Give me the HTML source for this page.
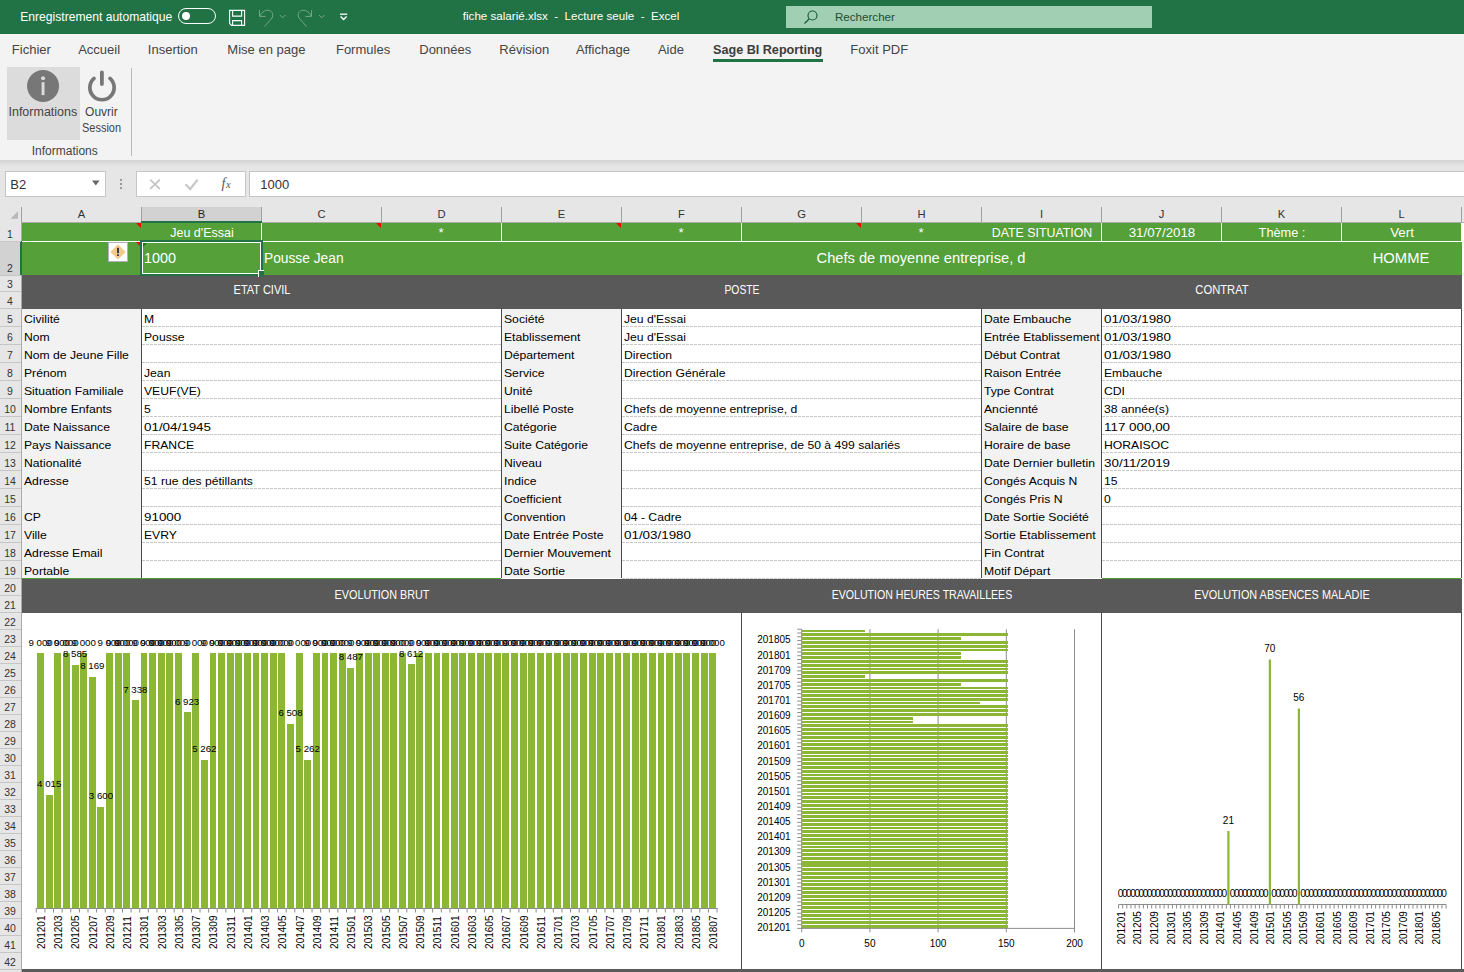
<!DOCTYPE html><html><head><meta charset="utf-8"><style>
html,body{margin:0;padding:0;width:1464px;height:972px;overflow:hidden;background:#fff}
body{position:relative;font-family:"Liberation Sans",sans-serif}
.r{position:absolute;box-sizing:content-box}
.t{position:absolute;white-space:pre}
svg.r{overflow:visible}
</style></head><body>
<div class="r" style="left:0px;top:0px;width:1464px;height:34px;background:#217346;"></div>
<div class="t" style="top:10.71px;font-size:12.1px;line-height:12.1px;color:#fff;left:20.30px;">Enregistrement automatique</div>
<div class="r" style="left:178px;top:8px;width:36px;height:14px;border:1px solid #fff;border-radius:9px;"></div>
<div class="r" style="left:182px;top:12px;width:8px;height:8px;border-radius:50%;background:#fff;"></div>
<svg class="r" style="left:0;top:0" width="360" height="34" viewBox="0 0 360 34">
<path d="M229.6 10.4 H244.6 V25.4 H231.6 L229.6 23.4 Z" fill="none" stroke="#fff" stroke-width="1.1"/>
<path d="M232.6 10.4 V16.1 H241.6 V10.4" fill="none" stroke="#fff" stroke-width="1.1"/>
<path d="M232.6 25.4 V20.6 H241.6 V25.4" fill="none" stroke="#fff" stroke-width="1.1"/>
<g fill="none" stroke="#74a887" stroke-width="1">
<path d="M259.5 10.2 V16.4 H265.6"/>
<path d="M260 16 C262 11.5 266 9.5 269.5 10.5 C273 11.7 273.5 15.5 272 18 L264.5 26.5"/>
<path d="M279.8 15 L282.6 17.8 L285.4 15"/>
<path d="M311.5 10.2 V16.4 H305.4"/>
<path d="M311 16 C309 11.5 305 9.5 301.5 10.5 C298 11.7 297.5 15.5 299 18 L306.5 26.5"/>
<path d="M319 15 L321.8 17.8 L324.6 15"/>
</g>
<path d="M340 14.2 H347.2" stroke="#fff" stroke-width="1.3"/>
<path d="M340.6 16.6 L343.6 19.6 L346.6 16.6" fill="none" stroke="#fff" stroke-width="1.4"/>
</svg>
<div class="t" style="top:10.34px;font-size:11.6px;line-height:11.6px;color:#fff;left:462.80px;">fiche salarié.xlsx  -  Lecture seule  -  Excel</div>
<div class="r" style="left:786px;top:6px;width:366px;height:22px;background:#a0cfb3;"></div>
<svg class="r" style="left:803px;top:9px" width="16" height="16" viewBox="0 0 16 16">
<circle cx="9.5" cy="6.5" r="4.5" fill="none" stroke="#1f5f3a" stroke-width="1.2"/>
<path d="M6.3 9.7 L1.5 14.5" stroke="#1f5f3a" stroke-width="1.3"/>
</svg>
<div class="t" style="top:11.44px;font-size:11.6px;line-height:11.6px;color:#1a5030;left:835.00px;">Rechercher</div>
<div class="r" style="left:0px;top:34px;width:1464px;height:126px;background:#f3f3f3;"></div>
<div class="t" style="top:42.85px;font-size:13px;line-height:13px;color:#444;left:11.86px;">Fichier</div>
<div class="t" style="top:42.85px;font-size:13px;line-height:13px;color:#444;left:78.16px;">Accueil</div>
<div class="t" style="top:42.85px;font-size:13px;line-height:13px;color:#444;left:147.86px;">Insertion</div>
<div class="t" style="top:42.85px;font-size:13px;line-height:13px;color:#444;left:227.36px;">Mise en page</div>
<div class="t" style="top:42.85px;font-size:13px;line-height:13px;color:#444;left:335.96px;">Formules</div>
<div class="t" style="top:42.85px;font-size:13px;line-height:13px;color:#444;left:419.26px;">Données</div>
<div class="t" style="top:42.85px;font-size:13px;line-height:13px;color:#444;left:499.36px;">Révision</div>
<div class="t" style="top:42.85px;font-size:13px;line-height:13px;color:#444;left:575.96px;">Affichage</div>
<div class="t" style="top:42.85px;font-size:13px;line-height:13px;color:#444;left:657.96px;">Aide</div>
<div class="t" style="top:42.85px;font-size:13px;line-height:13px;color:#444;left:850.36px;">Foxit PDF</div>
<div class="t" style="top:42.85px;font-size:13px;line-height:13px;color:#3c3c3c;font-weight:bold;left:713.20px;transform:scaleX(0.97);transform-origin:0 0;">Sage BI Reporting</div>
<div class="r" style="left:713px;top:59px;width:110px;height:3px;background:#217346;"></div>
<div class="r" style="left:7px;top:67px;width:73px;height:73px;background:#dcdcdc;"></div>
<svg class="r" style="left:0;top:0" width="130" height="110" viewBox="0 0 130 110">
<circle cx="43.05" cy="86" r="16" fill="#777"/>
<circle cx="43.05" cy="78.3" r="2" fill="#dcdcdc"/>
<rect x="41.6" y="82.2" width="2.9" height="12.9" fill="#dcdcdc"/>
<path d="M94.03 78.43 A12.15 12.15 0 1 0 109.97 78.43" fill="none" stroke="#777" stroke-width="3.7" stroke-linecap="round"/>
<path d="M101.9 72.3 V84" stroke="#777" stroke-width="3.8" stroke-linecap="round"/>
</svg>
<div class="t" style="top:105.97px;font-size:12.5px;line-height:12.5px;color:#444;left:8.47px;">Informations</div>
<div class="t" style="top:106.40px;font-size:12px;line-height:12px;color:#444;left:85.10px;">Ouvrir</div>
<div class="t" style="top:122.03px;font-size:12.2px;line-height:12.2px;color:#444;left:81.75px;transform:scaleX(0.9);transform-origin:0 0;">Session</div>
<div class="t" style="top:145.40px;font-size:12px;line-height:12px;color:#444;left:31.72px;">Informations</div>
<div class="r" style="left:131px;top:68px;width:1px;height:88px;background:#b8b8b8;"></div>
<div class="r" style="left:0;top:160px;width:1464px;height:47px;background:#e6e6e6"></div>
<div class="r" style="left:0;top:160px;width:1464px;height:6px;background:linear-gradient(#d2d2d2,#e6e6e6)"></div>
<div class="r" style="left:5px;top:171px;width:99px;height:24px;background:#fff;border:1px solid #c6c6c6"></div>
<div class="t" style="top:177.75px;font-size:13px;line-height:13px;color:#333;left:10.26px;">B2</div>
<svg class="r" style="left:91px;top:180px" width="10" height="7" viewBox="0 0 10 7"><path d="M1 0.5 H8.6 L4.8 5.5 Z" fill="#666"/></svg>
<div class="r" style="left:120px;top:179px;width:2px;height:2px;background:#9a9a9a;"></div>
<div class="r" style="left:120px;top:183px;width:2px;height:2px;background:#9a9a9a;"></div>
<div class="r" style="left:120px;top:187px;width:2px;height:2px;background:#9a9a9a;"></div>
<div class="r" style="left:136px;top:171px;width:108px;height:24px;background:#fff;border:1px solid #c6c6c6"></div>
<svg class="r" style="left:145px;top:174px" width="100" height="20" viewBox="0 0 100 20">
<path d="M5.2 5.7 L14.8 14.9 M14.8 5.7 L5.2 14.9" stroke="#c2c2c2" stroke-width="1.6"/>
<path d="M40.5 10.2 L45.2 15 L52.6 5.8" fill="none" stroke="#c8c8c8" stroke-width="2.2"/>
</svg>
<div class="t" style="left:221.5px;top:177px;font-family:'Liberation Serif';font-style:italic;font-size:14px;line-height:14px;color:#555">f<span style="font-size:10.5px;margin-left:0.5px">x</span></div>
<div class="r" style="left:249px;top:171px;width:1220px;height:24px;background:#fff;border:1px solid #c6c6c6"></div>
<div class="t" style="top:177.75px;font-size:13px;line-height:13px;color:#333;left:260.26px;">1000</div>
<div class="r" style="left:0px;top:207px;width:1464px;height:15px;background:#e6e6e6;"></div>
<div class="r" style="left:141px;top:207px;width:120px;height:15px;background:#d2d2d2;"></div>
<div class="r" style="left:21px;top:207px;width:1px;height:15px;background:#a0a0a0;"></div>
<div class="r" style="left:141px;top:207px;width:1px;height:15px;background:#a0a0a0;"></div>
<div class="r" style="left:261px;top:207px;width:1px;height:15px;background:#a0a0a0;"></div>
<div class="r" style="left:381px;top:207px;width:1px;height:15px;background:#a0a0a0;"></div>
<div class="r" style="left:501px;top:207px;width:1px;height:15px;background:#a0a0a0;"></div>
<div class="r" style="left:621px;top:207px;width:1px;height:15px;background:#a0a0a0;"></div>
<div class="r" style="left:741px;top:207px;width:1px;height:15px;background:#a0a0a0;"></div>
<div class="r" style="left:861px;top:207px;width:1px;height:15px;background:#a0a0a0;"></div>
<div class="r" style="left:981px;top:207px;width:1px;height:15px;background:#a0a0a0;"></div>
<div class="r" style="left:1101px;top:207px;width:1px;height:15px;background:#a0a0a0;"></div>
<div class="r" style="left:1221px;top:207px;width:1px;height:15px;background:#a0a0a0;"></div>
<div class="r" style="left:1341px;top:207px;width:1px;height:15px;background:#a0a0a0;"></div>
<div class="r" style="left:1461px;top:207px;width:1px;height:15px;background:#a0a0a0;"></div>
<div class="r" style="left:0px;top:222px;width:1464px;height:1px;background:#ababab;"></div>
<div class="r" style="left:141px;top:221px;width:121px;height:2px;background:#217346;"></div>
<svg class="r" style="left:0;top:207px" width="21" height="15"><path d="M10.5 11.8 H18 V4.2 Z" fill="#b8b8b8"/></svg>
<div class="t" style="top:208.78px;font-size:11.2px;line-height:11.2px;color:#333;left:-518.50px;width:1200px;text-align:center;">A</div>
<div class="t" style="top:208.78px;font-size:11.2px;line-height:11.2px;color:#222;left:-398.50px;width:1200px;text-align:center;">B</div>
<div class="t" style="top:208.78px;font-size:11.2px;line-height:11.2px;color:#333;left:-278.50px;width:1200px;text-align:center;">C</div>
<div class="t" style="top:208.78px;font-size:11.2px;line-height:11.2px;color:#333;left:-158.50px;width:1200px;text-align:center;">D</div>
<div class="t" style="top:208.78px;font-size:11.2px;line-height:11.2px;color:#333;left:-38.50px;width:1200px;text-align:center;">E</div>
<div class="t" style="top:208.78px;font-size:11.2px;line-height:11.2px;color:#333;left:81.50px;width:1200px;text-align:center;">F</div>
<div class="t" style="top:208.78px;font-size:11.2px;line-height:11.2px;color:#333;left:201.50px;width:1200px;text-align:center;">G</div>
<div class="t" style="top:208.78px;font-size:11.2px;line-height:11.2px;color:#333;left:321.50px;width:1200px;text-align:center;">H</div>
<div class="t" style="top:208.78px;font-size:11.2px;line-height:11.2px;color:#333;left:441.50px;width:1200px;text-align:center;">I</div>
<div class="t" style="top:208.78px;font-size:11.2px;line-height:11.2px;color:#333;left:561.50px;width:1200px;text-align:center;">J</div>
<div class="t" style="top:208.78px;font-size:11.2px;line-height:11.2px;color:#333;left:681.50px;width:1200px;text-align:center;">K</div>
<div class="t" style="top:208.78px;font-size:11.2px;line-height:11.2px;color:#333;left:801.50px;width:1200px;text-align:center;">L</div>
<div class="r" style="left:0px;top:222px;width:21px;height:750px;background:#e6e6e6;"></div>
<div class="r" style="left:0px;top:242px;width:21px;height:33px;background:#d2d2d2;"></div>
<div class="r" style="left:21px;top:222px;width:1px;height:750px;background:#ababab;"></div>
<div class="r" style="left:20px;top:241px;width:2px;height:34px;background:#217346;"></div>
<div class="r" style="left:0px;top:241px;width:21px;height:1px;background:#c6c6c6;"></div>
<div class="t" style="top:227.74px;font-size:11.6px;line-height:11.6px;color:#333;left:-590.20px;width:1200px;text-align:center;transform:scaleX(0.9);transform-origin:600px 0;">1</div>
<div class="r" style="left:0px;top:275px;width:21px;height:1px;background:#c6c6c6;"></div>
<div class="t" style="top:261.74px;font-size:11.6px;line-height:11.6px;color:#333;left:-590.20px;width:1200px;text-align:center;transform:scaleX(0.9);transform-origin:600px 0;">2</div>
<div class="r" style="left:0px;top:291px;width:21px;height:1px;background:#c6c6c6;"></div>
<div class="t" style="top:277.74px;font-size:11.6px;line-height:11.6px;color:#333;left:-590.20px;width:1200px;text-align:center;transform:scaleX(0.9);transform-origin:600px 0;">3</div>
<div class="r" style="left:0px;top:308px;width:21px;height:1px;background:#c6c6c6;"></div>
<div class="t" style="top:294.74px;font-size:11.6px;line-height:11.6px;color:#333;left:-590.20px;width:1200px;text-align:center;transform:scaleX(0.9);transform-origin:600px 0;">4</div>
<div class="r" style="left:0px;top:326px;width:21px;height:1px;background:#c6c6c6;"></div>
<div class="t" style="top:312.74px;font-size:11.6px;line-height:11.6px;color:#333;left:-590.20px;width:1200px;text-align:center;transform:scaleX(0.9);transform-origin:600px 0;">5</div>
<div class="r" style="left:0px;top:344px;width:21px;height:1px;background:#c6c6c6;"></div>
<div class="t" style="top:330.74px;font-size:11.6px;line-height:11.6px;color:#333;left:-590.20px;width:1200px;text-align:center;transform:scaleX(0.9);transform-origin:600px 0;">6</div>
<div class="r" style="left:0px;top:362px;width:21px;height:1px;background:#c6c6c6;"></div>
<div class="t" style="top:348.74px;font-size:11.6px;line-height:11.6px;color:#333;left:-590.20px;width:1200px;text-align:center;transform:scaleX(0.9);transform-origin:600px 0;">7</div>
<div class="r" style="left:0px;top:380px;width:21px;height:1px;background:#c6c6c6;"></div>
<div class="t" style="top:366.74px;font-size:11.6px;line-height:11.6px;color:#333;left:-590.20px;width:1200px;text-align:center;transform:scaleX(0.9);transform-origin:600px 0;">8</div>
<div class="r" style="left:0px;top:398px;width:21px;height:1px;background:#c6c6c6;"></div>
<div class="t" style="top:384.74px;font-size:11.6px;line-height:11.6px;color:#333;left:-590.20px;width:1200px;text-align:center;transform:scaleX(0.9);transform-origin:600px 0;">9</div>
<div class="r" style="left:0px;top:416px;width:21px;height:1px;background:#c6c6c6;"></div>
<div class="t" style="top:402.74px;font-size:11.6px;line-height:11.6px;color:#333;left:-590.20px;width:1200px;text-align:center;transform:scaleX(0.9);transform-origin:600px 0;">10</div>
<div class="r" style="left:0px;top:434px;width:21px;height:1px;background:#c6c6c6;"></div>
<div class="t" style="top:420.74px;font-size:11.6px;line-height:11.6px;color:#333;left:-590.20px;width:1200px;text-align:center;transform:scaleX(0.9);transform-origin:600px 0;">11</div>
<div class="r" style="left:0px;top:452px;width:21px;height:1px;background:#c6c6c6;"></div>
<div class="t" style="top:438.74px;font-size:11.6px;line-height:11.6px;color:#333;left:-590.20px;width:1200px;text-align:center;transform:scaleX(0.9);transform-origin:600px 0;">12</div>
<div class="r" style="left:0px;top:470px;width:21px;height:1px;background:#c6c6c6;"></div>
<div class="t" style="top:456.74px;font-size:11.6px;line-height:11.6px;color:#333;left:-590.20px;width:1200px;text-align:center;transform:scaleX(0.9);transform-origin:600px 0;">13</div>
<div class="r" style="left:0px;top:488px;width:21px;height:1px;background:#c6c6c6;"></div>
<div class="t" style="top:474.74px;font-size:11.6px;line-height:11.6px;color:#333;left:-590.20px;width:1200px;text-align:center;transform:scaleX(0.9);transform-origin:600px 0;">14</div>
<div class="r" style="left:0px;top:506px;width:21px;height:1px;background:#c6c6c6;"></div>
<div class="t" style="top:492.74px;font-size:11.6px;line-height:11.6px;color:#333;left:-590.20px;width:1200px;text-align:center;transform:scaleX(0.9);transform-origin:600px 0;">15</div>
<div class="r" style="left:0px;top:524px;width:21px;height:1px;background:#c6c6c6;"></div>
<div class="t" style="top:510.74px;font-size:11.6px;line-height:11.6px;color:#333;left:-590.20px;width:1200px;text-align:center;transform:scaleX(0.9);transform-origin:600px 0;">16</div>
<div class="r" style="left:0px;top:542px;width:21px;height:1px;background:#c6c6c6;"></div>
<div class="t" style="top:528.74px;font-size:11.6px;line-height:11.6px;color:#333;left:-590.20px;width:1200px;text-align:center;transform:scaleX(0.9);transform-origin:600px 0;">17</div>
<div class="r" style="left:0px;top:560px;width:21px;height:1px;background:#c6c6c6;"></div>
<div class="t" style="top:546.74px;font-size:11.6px;line-height:11.6px;color:#333;left:-590.20px;width:1200px;text-align:center;transform:scaleX(0.9);transform-origin:600px 0;">18</div>
<div class="r" style="left:0px;top:578px;width:21px;height:1px;background:#c6c6c6;"></div>
<div class="t" style="top:564.74px;font-size:11.6px;line-height:11.6px;color:#333;left:-590.20px;width:1200px;text-align:center;transform:scaleX(0.9);transform-origin:600px 0;">19</div>
<div class="r" style="left:0px;top:595px;width:21px;height:1px;background:#c6c6c6;"></div>
<div class="t" style="top:581.74px;font-size:11.6px;line-height:11.6px;color:#333;left:-590.20px;width:1200px;text-align:center;transform:scaleX(0.9);transform-origin:600px 0;">20</div>
<div class="r" style="left:0px;top:612px;width:21px;height:1px;background:#c6c6c6;"></div>
<div class="t" style="top:598.74px;font-size:11.6px;line-height:11.6px;color:#333;left:-590.20px;width:1200px;text-align:center;transform:scaleX(0.9);transform-origin:600px 0;">21</div>
<div class="r" style="left:0px;top:629px;width:21px;height:1px;background:#c6c6c6;"></div>
<div class="t" style="top:615.74px;font-size:11.6px;line-height:11.6px;color:#333;left:-590.20px;width:1200px;text-align:center;transform:scaleX(0.9);transform-origin:600px 0;">22</div>
<div class="r" style="left:0px;top:646px;width:21px;height:1px;background:#c6c6c6;"></div>
<div class="t" style="top:632.74px;font-size:11.6px;line-height:11.6px;color:#333;left:-590.20px;width:1200px;text-align:center;transform:scaleX(0.9);transform-origin:600px 0;">23</div>
<div class="r" style="left:0px;top:663px;width:21px;height:1px;background:#c6c6c6;"></div>
<div class="t" style="top:649.74px;font-size:11.6px;line-height:11.6px;color:#333;left:-590.20px;width:1200px;text-align:center;transform:scaleX(0.9);transform-origin:600px 0;">24</div>
<div class="r" style="left:0px;top:680px;width:21px;height:1px;background:#c6c6c6;"></div>
<div class="t" style="top:666.74px;font-size:11.6px;line-height:11.6px;color:#333;left:-590.20px;width:1200px;text-align:center;transform:scaleX(0.9);transform-origin:600px 0;">25</div>
<div class="r" style="left:0px;top:697px;width:21px;height:1px;background:#c6c6c6;"></div>
<div class="t" style="top:683.74px;font-size:11.6px;line-height:11.6px;color:#333;left:-590.20px;width:1200px;text-align:center;transform:scaleX(0.9);transform-origin:600px 0;">26</div>
<div class="r" style="left:0px;top:714px;width:21px;height:1px;background:#c6c6c6;"></div>
<div class="t" style="top:700.74px;font-size:11.6px;line-height:11.6px;color:#333;left:-590.20px;width:1200px;text-align:center;transform:scaleX(0.9);transform-origin:600px 0;">27</div>
<div class="r" style="left:0px;top:731px;width:21px;height:1px;background:#c6c6c6;"></div>
<div class="t" style="top:717.74px;font-size:11.6px;line-height:11.6px;color:#333;left:-590.20px;width:1200px;text-align:center;transform:scaleX(0.9);transform-origin:600px 0;">28</div>
<div class="r" style="left:0px;top:748px;width:21px;height:1px;background:#c6c6c6;"></div>
<div class="t" style="top:734.74px;font-size:11.6px;line-height:11.6px;color:#333;left:-590.20px;width:1200px;text-align:center;transform:scaleX(0.9);transform-origin:600px 0;">29</div>
<div class="r" style="left:0px;top:765px;width:21px;height:1px;background:#c6c6c6;"></div>
<div class="t" style="top:751.74px;font-size:11.6px;line-height:11.6px;color:#333;left:-590.20px;width:1200px;text-align:center;transform:scaleX(0.9);transform-origin:600px 0;">30</div>
<div class="r" style="left:0px;top:782px;width:21px;height:1px;background:#c6c6c6;"></div>
<div class="t" style="top:768.74px;font-size:11.6px;line-height:11.6px;color:#333;left:-590.20px;width:1200px;text-align:center;transform:scaleX(0.9);transform-origin:600px 0;">31</div>
<div class="r" style="left:0px;top:799px;width:21px;height:1px;background:#c6c6c6;"></div>
<div class="t" style="top:785.74px;font-size:11.6px;line-height:11.6px;color:#333;left:-590.20px;width:1200px;text-align:center;transform:scaleX(0.9);transform-origin:600px 0;">32</div>
<div class="r" style="left:0px;top:816px;width:21px;height:1px;background:#c6c6c6;"></div>
<div class="t" style="top:802.74px;font-size:11.6px;line-height:11.6px;color:#333;left:-590.20px;width:1200px;text-align:center;transform:scaleX(0.9);transform-origin:600px 0;">33</div>
<div class="r" style="left:0px;top:833px;width:21px;height:1px;background:#c6c6c6;"></div>
<div class="t" style="top:819.74px;font-size:11.6px;line-height:11.6px;color:#333;left:-590.20px;width:1200px;text-align:center;transform:scaleX(0.9);transform-origin:600px 0;">34</div>
<div class="r" style="left:0px;top:850px;width:21px;height:1px;background:#c6c6c6;"></div>
<div class="t" style="top:836.74px;font-size:11.6px;line-height:11.6px;color:#333;left:-590.20px;width:1200px;text-align:center;transform:scaleX(0.9);transform-origin:600px 0;">35</div>
<div class="r" style="left:0px;top:867px;width:21px;height:1px;background:#c6c6c6;"></div>
<div class="t" style="top:853.74px;font-size:11.6px;line-height:11.6px;color:#333;left:-590.20px;width:1200px;text-align:center;transform:scaleX(0.9);transform-origin:600px 0;">36</div>
<div class="r" style="left:0px;top:884px;width:21px;height:1px;background:#c6c6c6;"></div>
<div class="t" style="top:870.74px;font-size:11.6px;line-height:11.6px;color:#333;left:-590.20px;width:1200px;text-align:center;transform:scaleX(0.9);transform-origin:600px 0;">37</div>
<div class="r" style="left:0px;top:901px;width:21px;height:1px;background:#c6c6c6;"></div>
<div class="t" style="top:887.74px;font-size:11.6px;line-height:11.6px;color:#333;left:-590.20px;width:1200px;text-align:center;transform:scaleX(0.9);transform-origin:600px 0;">38</div>
<div class="r" style="left:0px;top:918px;width:21px;height:1px;background:#c6c6c6;"></div>
<div class="t" style="top:904.74px;font-size:11.6px;line-height:11.6px;color:#333;left:-590.20px;width:1200px;text-align:center;transform:scaleX(0.9);transform-origin:600px 0;">39</div>
<div class="r" style="left:0px;top:935px;width:21px;height:1px;background:#c6c6c6;"></div>
<div class="t" style="top:921.74px;font-size:11.6px;line-height:11.6px;color:#333;left:-590.20px;width:1200px;text-align:center;transform:scaleX(0.9);transform-origin:600px 0;">40</div>
<div class="r" style="left:0px;top:952px;width:21px;height:1px;background:#c6c6c6;"></div>
<div class="t" style="top:938.74px;font-size:11.6px;line-height:11.6px;color:#333;left:-590.20px;width:1200px;text-align:center;transform:scaleX(0.9);transform-origin:600px 0;">41</div>
<div class="r" style="left:0px;top:969px;width:21px;height:1px;background:#c6c6c6;"></div>
<div class="t" style="top:955.74px;font-size:11.6px;line-height:11.6px;color:#333;left:-590.20px;width:1200px;text-align:center;transform:scaleX(0.9);transform-origin:600px 0;">42</div>
<div class="r" style="left:0px;top:969px;width:21px;height:1px;background:#c6c6c6;"></div>
<div class="r" style="left:0px;top:970px;width:21px;height:2px;background:#e6e6e6;"></div>
<div class="r" style="left:22px;top:969px;width:1442px;height:3px;background:#5a5a5a;"></div>
<div class="r" style="left:22px;top:223px;width:1442px;height:746px;background:#fff;"></div>
<div class="r" style="left:22px;top:223px;width:1440px;height:18px;background:#55a038;"></div>
<div class="r" style="left:22px;top:241px;width:1440px;height:1px;background:#fff;"></div>
<div class="r" style="left:22px;top:242px;width:1440px;height:33px;background:#55a038;"></div>
<div class="r" style="left:261px;top:223px;width:1px;height:18px;background:#fff;"></div>
<div class="r" style="left:501px;top:223px;width:1px;height:18px;background:#fff;"></div>
<div class="r" style="left:741px;top:223px;width:1px;height:18px;background:#fff;"></div>
<div class="r" style="left:1101px;top:223px;width:1px;height:18px;background:#fff;"></div>
<div class="r" style="left:1221px;top:223px;width:1px;height:18px;background:#fff;"></div>
<div class="r" style="left:1341px;top:223px;width:1px;height:18px;background:#fff;"></div>
<div class="r" style="left:1461px;top:223px;width:1px;height:18px;background:#fff;"></div>
<svg class="r" style="left:136px;top:223px" width="5" height="5"><path d="M0 0 H5 V5 Z" fill="#f00"/></svg>
<svg class="r" style="left:376px;top:223px" width="5" height="5"><path d="M0 0 H5 V5 Z" fill="#f00"/></svg>
<svg class="r" style="left:616px;top:223px" width="5" height="5"><path d="M0 0 H5 V5 Z" fill="#f00"/></svg>
<svg class="r" style="left:856px;top:223px" width="5" height="5"><path d="M0 0 H5 V5 Z" fill="#f00"/></svg>
<svg class="r" style="left:136px;top:242px" width="5" height="5"><path d="M0 0 H5 V5 Z" fill="#f00"/></svg>
<div class="r" style="left:22px;top:275px;width:1440px;height:34px;background:#595959;"></div>
<div class="r" style="left:22px;top:309px;width:119px;height:269px;background:#f2f2f2;"></div>
<div class="r" style="left:141px;top:309px;width:1px;height:269px;background:#4a4a4a;"></div>
<div class="r" style="left:142px;top:326px;width:359px;height:1px;background:repeating-linear-gradient(90deg,#c8c8c8 0 3px,transparent 3px 4px)"></div>
<div class="r" style="left:142px;top:344px;width:359px;height:1px;background:repeating-linear-gradient(90deg,#c8c8c8 0 3px,transparent 3px 4px)"></div>
<div class="r" style="left:142px;top:362px;width:359px;height:1px;background:repeating-linear-gradient(90deg,#c8c8c8 0 3px,transparent 3px 4px)"></div>
<div class="r" style="left:142px;top:380px;width:359px;height:1px;background:repeating-linear-gradient(90deg,#c8c8c8 0 3px,transparent 3px 4px)"></div>
<div class="r" style="left:142px;top:398px;width:359px;height:1px;background:repeating-linear-gradient(90deg,#c8c8c8 0 3px,transparent 3px 4px)"></div>
<div class="r" style="left:142px;top:416px;width:359px;height:1px;background:repeating-linear-gradient(90deg,#c8c8c8 0 3px,transparent 3px 4px)"></div>
<div class="r" style="left:142px;top:434px;width:359px;height:1px;background:repeating-linear-gradient(90deg,#c8c8c8 0 3px,transparent 3px 4px)"></div>
<div class="r" style="left:142px;top:452px;width:359px;height:1px;background:repeating-linear-gradient(90deg,#c8c8c8 0 3px,transparent 3px 4px)"></div>
<div class="r" style="left:142px;top:470px;width:359px;height:1px;background:repeating-linear-gradient(90deg,#c8c8c8 0 3px,transparent 3px 4px)"></div>
<div class="r" style="left:142px;top:488px;width:359px;height:1px;background:repeating-linear-gradient(90deg,#c8c8c8 0 3px,transparent 3px 4px)"></div>
<div class="r" style="left:142px;top:506px;width:359px;height:1px;background:repeating-linear-gradient(90deg,#c8c8c8 0 3px,transparent 3px 4px)"></div>
<div class="r" style="left:142px;top:524px;width:359px;height:1px;background:repeating-linear-gradient(90deg,#c8c8c8 0 3px,transparent 3px 4px)"></div>
<div class="r" style="left:142px;top:542px;width:359px;height:1px;background:repeating-linear-gradient(90deg,#c8c8c8 0 3px,transparent 3px 4px)"></div>
<div class="r" style="left:142px;top:560px;width:359px;height:1px;background:repeating-linear-gradient(90deg,#c8c8c8 0 3px,transparent 3px 4px)"></div>
<div class="r" style="left:142px;top:578px;width:359px;height:1px;background:repeating-linear-gradient(90deg,#c8c8c8 0 3px,transparent 3px 4px)"></div>
<div class="r" style="left:502px;top:309px;width:119px;height:269px;background:#f2f2f2;"></div>
<div class="r" style="left:621px;top:309px;width:1px;height:269px;background:#4a4a4a;"></div>
<div class="r" style="left:622px;top:326px;width:359px;height:1px;background:repeating-linear-gradient(90deg,#c8c8c8 0 3px,transparent 3px 4px)"></div>
<div class="r" style="left:622px;top:344px;width:359px;height:1px;background:repeating-linear-gradient(90deg,#c8c8c8 0 3px,transparent 3px 4px)"></div>
<div class="r" style="left:622px;top:362px;width:359px;height:1px;background:repeating-linear-gradient(90deg,#c8c8c8 0 3px,transparent 3px 4px)"></div>
<div class="r" style="left:622px;top:380px;width:359px;height:1px;background:repeating-linear-gradient(90deg,#c8c8c8 0 3px,transparent 3px 4px)"></div>
<div class="r" style="left:622px;top:398px;width:359px;height:1px;background:repeating-linear-gradient(90deg,#c8c8c8 0 3px,transparent 3px 4px)"></div>
<div class="r" style="left:622px;top:416px;width:359px;height:1px;background:repeating-linear-gradient(90deg,#c8c8c8 0 3px,transparent 3px 4px)"></div>
<div class="r" style="left:622px;top:434px;width:359px;height:1px;background:repeating-linear-gradient(90deg,#c8c8c8 0 3px,transparent 3px 4px)"></div>
<div class="r" style="left:622px;top:452px;width:359px;height:1px;background:repeating-linear-gradient(90deg,#c8c8c8 0 3px,transparent 3px 4px)"></div>
<div class="r" style="left:622px;top:470px;width:359px;height:1px;background:repeating-linear-gradient(90deg,#c8c8c8 0 3px,transparent 3px 4px)"></div>
<div class="r" style="left:622px;top:488px;width:359px;height:1px;background:repeating-linear-gradient(90deg,#c8c8c8 0 3px,transparent 3px 4px)"></div>
<div class="r" style="left:622px;top:506px;width:359px;height:1px;background:repeating-linear-gradient(90deg,#c8c8c8 0 3px,transparent 3px 4px)"></div>
<div class="r" style="left:622px;top:524px;width:359px;height:1px;background:repeating-linear-gradient(90deg,#c8c8c8 0 3px,transparent 3px 4px)"></div>
<div class="r" style="left:622px;top:542px;width:359px;height:1px;background:repeating-linear-gradient(90deg,#c8c8c8 0 3px,transparent 3px 4px)"></div>
<div class="r" style="left:622px;top:560px;width:359px;height:1px;background:repeating-linear-gradient(90deg,#c8c8c8 0 3px,transparent 3px 4px)"></div>
<div class="r" style="left:622px;top:578px;width:359px;height:1px;background:repeating-linear-gradient(90deg,#c8c8c8 0 3px,transparent 3px 4px)"></div>
<div class="r" style="left:982px;top:309px;width:119px;height:269px;background:#f2f2f2;"></div>
<div class="r" style="left:1101px;top:309px;width:1px;height:269px;background:#4a4a4a;"></div>
<div class="r" style="left:1102px;top:326px;width:359px;height:1px;background:repeating-linear-gradient(90deg,#c8c8c8 0 3px,transparent 3px 4px)"></div>
<div class="r" style="left:1102px;top:344px;width:359px;height:1px;background:repeating-linear-gradient(90deg,#c8c8c8 0 3px,transparent 3px 4px)"></div>
<div class="r" style="left:1102px;top:362px;width:359px;height:1px;background:repeating-linear-gradient(90deg,#c8c8c8 0 3px,transparent 3px 4px)"></div>
<div class="r" style="left:1102px;top:380px;width:359px;height:1px;background:repeating-linear-gradient(90deg,#c8c8c8 0 3px,transparent 3px 4px)"></div>
<div class="r" style="left:1102px;top:398px;width:359px;height:1px;background:repeating-linear-gradient(90deg,#c8c8c8 0 3px,transparent 3px 4px)"></div>
<div class="r" style="left:1102px;top:416px;width:359px;height:1px;background:repeating-linear-gradient(90deg,#c8c8c8 0 3px,transparent 3px 4px)"></div>
<div class="r" style="left:1102px;top:434px;width:359px;height:1px;background:repeating-linear-gradient(90deg,#c8c8c8 0 3px,transparent 3px 4px)"></div>
<div class="r" style="left:1102px;top:452px;width:359px;height:1px;background:repeating-linear-gradient(90deg,#c8c8c8 0 3px,transparent 3px 4px)"></div>
<div class="r" style="left:1102px;top:470px;width:359px;height:1px;background:repeating-linear-gradient(90deg,#c8c8c8 0 3px,transparent 3px 4px)"></div>
<div class="r" style="left:1102px;top:488px;width:359px;height:1px;background:repeating-linear-gradient(90deg,#c8c8c8 0 3px,transparent 3px 4px)"></div>
<div class="r" style="left:1102px;top:506px;width:359px;height:1px;background:repeating-linear-gradient(90deg,#c8c8c8 0 3px,transparent 3px 4px)"></div>
<div class="r" style="left:1102px;top:524px;width:359px;height:1px;background:repeating-linear-gradient(90deg,#c8c8c8 0 3px,transparent 3px 4px)"></div>
<div class="r" style="left:1102px;top:542px;width:359px;height:1px;background:repeating-linear-gradient(90deg,#c8c8c8 0 3px,transparent 3px 4px)"></div>
<div class="r" style="left:1102px;top:560px;width:359px;height:1px;background:repeating-linear-gradient(90deg,#c8c8c8 0 3px,transparent 3px 4px)"></div>
<div class="r" style="left:1102px;top:578px;width:359px;height:1px;background:repeating-linear-gradient(90deg,#c8c8c8 0 3px,transparent 3px 4px)"></div>
<div class="r" style="left:501px;top:309px;width:1px;height:269px;background:#4a4a4a;"></div>
<div class="r" style="left:981px;top:309px;width:1px;height:269px;background:#4a4a4a;"></div>
<div class="r" style="left:1461px;top:309px;width:1px;height:269px;background:#4a4a4a;"></div>
<div class="r" style="left:22px;top:578px;width:479px;height:1px;background:#4aa02c;"></div>
<div class="r" style="left:1102px;top:578px;width:359px;height:1px;background:#4aa02c;"></div>
<div class="r" style="left:22px;top:579px;width:1440px;height:34px;background:#595959;"></div>
<div class="r" style="left:741px;top:612px;width:1px;height:357px;background:#4a4a4a;"></div>
<div class="r" style="left:1101px;top:612px;width:1px;height:357px;background:#4a4a4a;"></div>
<div class="r" style="left:1461px;top:612px;width:1px;height:357px;background:#4a4a4a;"></div>
<div class="t" style="top:312.84px;font-size:11.6px;line-height:11.6px;color:#000;left:23.90px;transform:scaleX(1.05);transform-origin:0 0;">Civilité</div>
<div class="t" style="top:312.84px;font-size:11.6px;line-height:11.6px;color:#000;left:143.90px;transform:scaleX(1.05);transform-origin:0 0;">M</div>
<div class="t" style="top:312.84px;font-size:11.6px;line-height:11.6px;color:#000;left:503.90px;transform:scaleX(1.05);transform-origin:0 0;">Société</div>
<div class="t" style="top:312.84px;font-size:11.6px;line-height:11.6px;color:#000;left:623.90px;transform:scaleX(1.05);transform-origin:0 0;">Jeu d&#x27;Essai</div>
<div class="t" style="top:312.84px;font-size:11.6px;line-height:11.6px;color:#000;left:983.90px;transform:scaleX(1.05);transform-origin:0 0;">Date Embauche</div>
<div class="t" style="top:312.84px;font-size:11.6px;line-height:11.6px;color:#000;left:1103.90px;transform:scaleX(1.155);transform-origin:0 0;">01/03/1980</div>
<div class="t" style="top:330.84px;font-size:11.6px;line-height:11.6px;color:#000;left:23.90px;transform:scaleX(1.05);transform-origin:0 0;">Nom</div>
<div class="t" style="top:330.84px;font-size:11.6px;line-height:11.6px;color:#000;left:143.90px;transform:scaleX(1.05);transform-origin:0 0;">Pousse</div>
<div class="t" style="top:330.84px;font-size:11.6px;line-height:11.6px;color:#000;left:503.90px;transform:scaleX(1.05);transform-origin:0 0;">Etablissement</div>
<div class="t" style="top:330.84px;font-size:11.6px;line-height:11.6px;color:#000;left:623.90px;transform:scaleX(1.05);transform-origin:0 0;">Jeu d&#x27;Essai</div>
<div class="t" style="top:330.84px;font-size:11.6px;line-height:11.6px;color:#000;left:983.90px;transform:scaleX(1.05);transform-origin:0 0;">Entrée Etablissement</div>
<div class="t" style="top:330.84px;font-size:11.6px;line-height:11.6px;color:#000;left:1103.90px;transform:scaleX(1.155);transform-origin:0 0;">01/03/1980</div>
<div class="t" style="top:348.84px;font-size:11.6px;line-height:11.6px;color:#000;left:23.90px;transform:scaleX(1.05);transform-origin:0 0;">Nom de Jeune Fille</div>
<div class="t" style="top:348.84px;font-size:11.6px;line-height:11.6px;color:#000;left:503.90px;transform:scaleX(1.05);transform-origin:0 0;">Département</div>
<div class="t" style="top:348.84px;font-size:11.6px;line-height:11.6px;color:#000;left:623.90px;transform:scaleX(1.05);transform-origin:0 0;">Direction</div>
<div class="t" style="top:348.84px;font-size:11.6px;line-height:11.6px;color:#000;left:983.90px;transform:scaleX(1.05);transform-origin:0 0;">Début Contrat</div>
<div class="t" style="top:348.84px;font-size:11.6px;line-height:11.6px;color:#000;left:1103.90px;transform:scaleX(1.155);transform-origin:0 0;">01/03/1980</div>
<div class="t" style="top:366.84px;font-size:11.6px;line-height:11.6px;color:#000;left:23.90px;transform:scaleX(1.05);transform-origin:0 0;">Prénom</div>
<div class="t" style="top:366.84px;font-size:11.6px;line-height:11.6px;color:#000;left:143.90px;transform:scaleX(1.05);transform-origin:0 0;">Jean</div>
<div class="t" style="top:366.84px;font-size:11.6px;line-height:11.6px;color:#000;left:503.90px;transform:scaleX(1.05);transform-origin:0 0;">Service</div>
<div class="t" style="top:366.84px;font-size:11.6px;line-height:11.6px;color:#000;left:623.90px;transform:scaleX(1.05);transform-origin:0 0;">Direction Générale</div>
<div class="t" style="top:366.84px;font-size:11.6px;line-height:11.6px;color:#000;left:983.90px;transform:scaleX(1.05);transform-origin:0 0;">Raison Entrée</div>
<div class="t" style="top:366.84px;font-size:11.6px;line-height:11.6px;color:#000;left:1103.90px;transform:scaleX(1.05);transform-origin:0 0;">Embauche</div>
<div class="t" style="top:384.84px;font-size:11.6px;line-height:11.6px;color:#000;left:23.90px;transform:scaleX(1.05);transform-origin:0 0;">Situation Familiale</div>
<div class="t" style="top:384.84px;font-size:11.6px;line-height:11.6px;color:#000;left:143.90px;transform:scaleX(1.05);transform-origin:0 0;">VEUF(VE)</div>
<div class="t" style="top:384.84px;font-size:11.6px;line-height:11.6px;color:#000;left:503.90px;transform:scaleX(1.05);transform-origin:0 0;">Unité</div>
<div class="t" style="top:384.84px;font-size:11.6px;line-height:11.6px;color:#000;left:983.90px;transform:scaleX(1.05);transform-origin:0 0;">Type Contrat</div>
<div class="t" style="top:384.84px;font-size:11.6px;line-height:11.6px;color:#000;left:1103.90px;transform:scaleX(1.05);transform-origin:0 0;">CDI</div>
<div class="t" style="top:402.84px;font-size:11.6px;line-height:11.6px;color:#000;left:23.90px;transform:scaleX(1.05);transform-origin:0 0;">Nombre Enfants</div>
<div class="t" style="top:402.84px;font-size:11.6px;line-height:11.6px;color:#000;left:143.90px;transform:scaleX(1.05);transform-origin:0 0;">5</div>
<div class="t" style="top:402.84px;font-size:11.6px;line-height:11.6px;color:#000;left:503.90px;transform:scaleX(1.05);transform-origin:0 0;">Libellé Poste</div>
<div class="t" style="top:402.84px;font-size:11.6px;line-height:11.6px;color:#000;left:623.90px;transform:scaleX(1.05);transform-origin:0 0;">Chefs de moyenne entreprise, d</div>
<div class="t" style="top:402.84px;font-size:11.6px;line-height:11.6px;color:#000;left:983.90px;transform:scaleX(1.05);transform-origin:0 0;">Anciennté</div>
<div class="t" style="top:402.84px;font-size:11.6px;line-height:11.6px;color:#000;left:1103.90px;transform:scaleX(1.05);transform-origin:0 0;">38 année(s)</div>
<div class="t" style="top:420.84px;font-size:11.6px;line-height:11.6px;color:#000;left:23.90px;transform:scaleX(1.05);transform-origin:0 0;">Date Naissance</div>
<div class="t" style="top:420.84px;font-size:11.6px;line-height:11.6px;color:#000;left:143.90px;transform:scaleX(1.155);transform-origin:0 0;">01/04/1945</div>
<div class="t" style="top:420.84px;font-size:11.6px;line-height:11.6px;color:#000;left:503.90px;transform:scaleX(1.05);transform-origin:0 0;">Catégorie</div>
<div class="t" style="top:420.84px;font-size:11.6px;line-height:11.6px;color:#000;left:623.90px;transform:scaleX(1.05);transform-origin:0 0;">Cadre</div>
<div class="t" style="top:420.84px;font-size:11.6px;line-height:11.6px;color:#000;left:983.90px;transform:scaleX(1.05);transform-origin:0 0;">Salaire de base</div>
<div class="t" style="top:420.84px;font-size:11.6px;line-height:11.6px;color:#000;left:1103.90px;transform:scaleX(1.155);transform-origin:0 0;">117 000,00</div>
<div class="t" style="top:438.84px;font-size:11.6px;line-height:11.6px;color:#000;left:23.90px;transform:scaleX(1.05);transform-origin:0 0;">Pays Naissance</div>
<div class="t" style="top:438.84px;font-size:11.6px;line-height:11.6px;color:#000;left:143.90px;transform:scaleX(1.05);transform-origin:0 0;">FRANCE</div>
<div class="t" style="top:438.84px;font-size:11.6px;line-height:11.6px;color:#000;left:503.90px;transform:scaleX(1.05);transform-origin:0 0;">Suite Catégorie</div>
<div class="t" style="top:438.84px;font-size:11.6px;line-height:11.6px;color:#000;left:623.90px;transform:scaleX(1.05);transform-origin:0 0;">Chefs de moyenne entreprise, de 50 à 499 salariés</div>
<div class="t" style="top:438.84px;font-size:11.6px;line-height:11.6px;color:#000;left:983.90px;transform:scaleX(1.05);transform-origin:0 0;">Horaire de base</div>
<div class="t" style="top:438.84px;font-size:11.6px;line-height:11.6px;color:#000;left:1103.90px;transform:scaleX(1.05);transform-origin:0 0;">HORAISOC</div>
<div class="t" style="top:456.84px;font-size:11.6px;line-height:11.6px;color:#000;left:23.90px;transform:scaleX(1.05);transform-origin:0 0;">Nationalité</div>
<div class="t" style="top:456.84px;font-size:11.6px;line-height:11.6px;color:#000;left:503.90px;transform:scaleX(1.05);transform-origin:0 0;">Niveau</div>
<div class="t" style="top:456.84px;font-size:11.6px;line-height:11.6px;color:#000;left:983.90px;transform:scaleX(1.05);transform-origin:0 0;">Date Dernier bulletin</div>
<div class="t" style="top:456.84px;font-size:11.6px;line-height:11.6px;color:#000;left:1103.90px;transform:scaleX(1.155);transform-origin:0 0;">30/11/2019</div>
<div class="t" style="top:474.84px;font-size:11.6px;line-height:11.6px;color:#000;left:23.90px;transform:scaleX(1.05);transform-origin:0 0;">Adresse</div>
<div class="t" style="top:474.84px;font-size:11.6px;line-height:11.6px;color:#000;left:143.90px;transform:scaleX(1.05);transform-origin:0 0;">51 rue des pétillants</div>
<div class="t" style="top:474.84px;font-size:11.6px;line-height:11.6px;color:#000;left:503.90px;transform:scaleX(1.05);transform-origin:0 0;">Indice</div>
<div class="t" style="top:474.84px;font-size:11.6px;line-height:11.6px;color:#000;left:983.90px;transform:scaleX(1.05);transform-origin:0 0;">Congés Acquis N</div>
<div class="t" style="top:474.84px;font-size:11.6px;line-height:11.6px;color:#000;left:1103.90px;transform:scaleX(1.05);transform-origin:0 0;">15</div>
<div class="t" style="top:492.84px;font-size:11.6px;line-height:11.6px;color:#000;left:503.90px;transform:scaleX(1.05);transform-origin:0 0;">Coefficient</div>
<div class="t" style="top:492.84px;font-size:11.6px;line-height:11.6px;color:#000;left:983.90px;transform:scaleX(1.05);transform-origin:0 0;">Congés Pris N</div>
<div class="t" style="top:492.84px;font-size:11.6px;line-height:11.6px;color:#000;left:1103.90px;transform:scaleX(1.05);transform-origin:0 0;">0</div>
<div class="t" style="top:510.84px;font-size:11.6px;line-height:11.6px;color:#000;left:23.90px;transform:scaleX(1.05);transform-origin:0 0;">CP</div>
<div class="t" style="top:510.84px;font-size:11.6px;line-height:11.6px;color:#000;left:143.90px;transform:scaleX(1.155);transform-origin:0 0;">91000</div>
<div class="t" style="top:510.84px;font-size:11.6px;line-height:11.6px;color:#000;left:503.90px;transform:scaleX(1.05);transform-origin:0 0;">Convention</div>
<div class="t" style="top:510.84px;font-size:11.6px;line-height:11.6px;color:#000;left:623.90px;transform:scaleX(1.05);transform-origin:0 0;">04 - Cadre</div>
<div class="t" style="top:510.84px;font-size:11.6px;line-height:11.6px;color:#000;left:983.90px;transform:scaleX(1.05);transform-origin:0 0;">Date Sortie Société</div>
<div class="t" style="top:528.84px;font-size:11.6px;line-height:11.6px;color:#000;left:23.90px;transform:scaleX(1.05);transform-origin:0 0;">Ville</div>
<div class="t" style="top:528.84px;font-size:11.6px;line-height:11.6px;color:#000;left:143.90px;transform:scaleX(1.05);transform-origin:0 0;">EVRY</div>
<div class="t" style="top:528.84px;font-size:11.6px;line-height:11.6px;color:#000;left:503.90px;transform:scaleX(1.05);transform-origin:0 0;">Date Entrée Poste</div>
<div class="t" style="top:528.84px;font-size:11.6px;line-height:11.6px;color:#000;left:623.90px;transform:scaleX(1.155);transform-origin:0 0;">01/03/1980</div>
<div class="t" style="top:528.84px;font-size:11.6px;line-height:11.6px;color:#000;left:983.90px;transform:scaleX(1.05);transform-origin:0 0;">Sortie Etablissement</div>
<div class="t" style="top:546.84px;font-size:11.6px;line-height:11.6px;color:#000;left:23.90px;transform:scaleX(1.05);transform-origin:0 0;">Adresse Email</div>
<div class="t" style="top:546.84px;font-size:11.6px;line-height:11.6px;color:#000;left:503.90px;transform:scaleX(1.05);transform-origin:0 0;">Dernier Mouvement</div>
<div class="t" style="top:546.84px;font-size:11.6px;line-height:11.6px;color:#000;left:983.90px;transform:scaleX(1.05);transform-origin:0 0;">Fin Contrat</div>
<div class="t" style="top:564.84px;font-size:11.6px;line-height:11.6px;color:#000;left:23.90px;transform:scaleX(1.05);transform-origin:0 0;">Portable</div>
<div class="t" style="top:564.84px;font-size:11.6px;line-height:11.6px;color:#000;left:503.90px;transform:scaleX(1.05);transform-origin:0 0;">Date Sortie</div>
<div class="t" style="top:564.84px;font-size:11.6px;line-height:11.6px;color:#000;left:983.90px;transform:scaleX(1.05);transform-origin:0 0;">Motif Départ</div>
<div class="t" style="top:225.59px;font-size:13.3px;line-height:13.3px;color:#ffffff;left:-398.30px;width:1200px;text-align:center;transform:scaleX(0.94);transform-origin:600px 0;">Jeu d&#x27;Essai</div>
<div class="t" style="top:225.59px;font-size:13.3px;line-height:13.3px;color:#ffffff;left:-159.00px;width:1200px;text-align:center;">*</div>
<div class="t" style="top:225.59px;font-size:13.3px;line-height:13.3px;color:#ffffff;left:81.00px;width:1200px;text-align:center;">*</div>
<div class="t" style="top:225.59px;font-size:13.3px;line-height:13.3px;color:#ffffff;left:321.00px;width:1200px;text-align:center;">*</div>
<div class="t" style="top:225.89px;font-size:13.3px;line-height:13.3px;color:#ffffff;left:441.50px;width:1200px;text-align:center;transform:scaleX(0.93);transform-origin:600px 0;">DATE SITUATION</div>
<div class="t" style="top:225.89px;font-size:13.3px;line-height:13.3px;color:#ffffff;left:562.00px;width:1200px;text-align:center;">31/07/2018</div>
<div class="t" style="top:225.89px;font-size:13.3px;line-height:13.3px;color:#ffffff;left:682.00px;width:1200px;text-align:center;transform:scaleX(0.96);transform-origin:600px 0;">Thème :</div>
<div class="t" style="top:225.89px;font-size:13.3px;line-height:13.3px;color:#ffffff;left:802.00px;width:1200px;text-align:center;">Vert</div>
<div class="r" style="left:140px;top:240px;width:123px;height:36px;background:#217346;"></div>
<div class="r" style="left:142px;top:242px;width:119px;height:32px;background:#fff;"></div>
<div class="r" style="left:143px;top:243px;width:117px;height:30px;background:#55a038;"></div>
<div class="r" style="left:258px;top:270px;width:6px;height:7px;background:#fff;"></div>
<div class="r" style="left:259px;top:271px;width:5px;height:6px;background:#217346;"></div>
<div class="t" style="top:249.51px;font-size:15.4px;line-height:15.4px;color:#ffffff;left:143.69px;transform:scaleX(0.935);transform-origin:0 0;">1000</div>
<div class="t" style="top:249.51px;font-size:15.4px;line-height:15.4px;color:#ffffff;left:263.54px;transform:scaleX(0.894);transform-origin:0 0;">Pousse Jean</div>
<div class="t" style="top:249.51px;font-size:15.4px;line-height:15.4px;color:#ffffff;left:320.70px;width:1200px;text-align:center;transform:scaleX(0.954);transform-origin:600px 0;">Chefs de moyenne entreprise, d</div>
<div class="t" style="top:249.51px;font-size:15.4px;line-height:15.4px;color:#ffffff;left:801.20px;width:1200px;text-align:center;transform:scaleX(0.959);transform-origin:600px 0;">HOMME</div>
<svg class="r" style="left:108px;top:242px" width="20" height="20" viewBox="0 0 20 20">
<rect x="0.5" y="0.5" width="19" height="19" fill="#fff" stroke="#b5b0b8"/>
<path d="M10 2.2 L17.7 9.9 L10 17.6 L2.3 9.9 Z" fill="#f5c98a"/>
<rect x="9" y="5.8" width="2" height="5.4" fill="#363c4a"/>
<rect x="9" y="12.4" width="2" height="1.6" fill="#363c4a"/>
</svg>
<svg class="r" style="left:143px;top:243px" width="4" height="4"><path d="M0 0 H4 L0 4 Z" fill="#0b7a1c"/></svg>
<div class="t" style="top:284.09px;font-size:12.6px;line-height:12.6px;color:#fff;left:-338.20px;width:1200px;text-align:center;transform:scaleX(0.872);transform-origin:600px 0;">ETAT CIVIL</div>
<div class="t" style="top:284.09px;font-size:12.6px;line-height:12.6px;color:#fff;left:142.10px;width:1200px;text-align:center;transform:scaleX(0.82);transform-origin:600px 0;">POSTE</div>
<div class="t" style="top:284.09px;font-size:12.6px;line-height:12.6px;color:#fff;left:621.90px;width:1200px;text-align:center;transform:scaleX(0.89);transform-origin:600px 0;">CONTRAT</div>
<div class="t" style="top:588.79px;font-size:12.6px;line-height:12.6px;color:#fff;left:-217.70px;width:1200px;text-align:center;transform:scaleX(0.858);transform-origin:600px 0;">EVOLUTION BRUT</div>
<div class="t" style="top:588.79px;font-size:12.6px;line-height:12.6px;color:#fff;left:322.20px;width:1200px;text-align:center;transform:scaleX(0.84);transform-origin:600px 0;">EVOLUTION HEURES TRAVAILLEES</div>
<div class="t" style="top:588.79px;font-size:12.6px;line-height:12.6px;color:#fff;left:681.60px;width:1200px;text-align:center;transform:scaleX(0.864);transform-origin:600px 0;">EVOLUTION ABSENCES MALADIE</div>
<svg class="r" style="left:0;top:0" width="1464" height="972" viewBox="0 0 1464 972" font-family="Liberation Sans">
<rect x="37.16" y="653.20" width="6.9" height="256.00" fill="#8bb734" shape-rendering="crispEdges"/>
<rect x="45.78" y="794.99" width="6.9" height="114.21" fill="#8bb734" shape-rendering="crispEdges"/>
<rect x="54.39" y="653.20" width="6.9" height="256.00" fill="#8bb734" shape-rendering="crispEdges"/>
<rect x="63.01" y="653.20" width="6.9" height="256.00" fill="#8bb734" shape-rendering="crispEdges"/>
<rect x="71.63" y="665.00" width="6.9" height="244.20" fill="#8bb734" shape-rendering="crispEdges"/>
<rect x="80.25" y="653.20" width="6.9" height="256.00" fill="#8bb734" shape-rendering="crispEdges"/>
<rect x="88.86" y="676.83" width="6.9" height="232.37" fill="#8bb734" shape-rendering="crispEdges"/>
<rect x="97.48" y="806.80" width="6.9" height="102.40" fill="#8bb734" shape-rendering="crispEdges"/>
<rect x="106.10" y="653.20" width="6.9" height="256.00" fill="#8bb734" shape-rendering="crispEdges"/>
<rect x="114.71" y="653.20" width="6.9" height="256.00" fill="#8bb734" shape-rendering="crispEdges"/>
<rect x="123.33" y="653.20" width="6.9" height="256.00" fill="#8bb734" shape-rendering="crispEdges"/>
<rect x="131.95" y="700.47" width="6.9" height="208.73" fill="#8bb734" shape-rendering="crispEdges"/>
<rect x="140.56" y="653.20" width="6.9" height="256.00" fill="#8bb734" shape-rendering="crispEdges"/>
<rect x="149.18" y="653.20" width="6.9" height="256.00" fill="#8bb734" shape-rendering="crispEdges"/>
<rect x="157.80" y="653.20" width="6.9" height="256.00" fill="#8bb734" shape-rendering="crispEdges"/>
<rect x="166.42" y="653.20" width="6.9" height="256.00" fill="#8bb734" shape-rendering="crispEdges"/>
<rect x="175.03" y="653.20" width="6.9" height="256.00" fill="#8bb734" shape-rendering="crispEdges"/>
<rect x="183.65" y="712.28" width="6.9" height="196.92" fill="#8bb734" shape-rendering="crispEdges"/>
<rect x="192.27" y="653.20" width="6.9" height="256.00" fill="#8bb734" shape-rendering="crispEdges"/>
<rect x="200.88" y="759.52" width="6.9" height="149.68" fill="#8bb734" shape-rendering="crispEdges"/>
<rect x="209.50" y="653.20" width="6.9" height="256.00" fill="#8bb734" shape-rendering="crispEdges"/>
<rect x="218.12" y="653.20" width="6.9" height="256.00" fill="#8bb734" shape-rendering="crispEdges"/>
<rect x="226.73" y="653.20" width="6.9" height="256.00" fill="#8bb734" shape-rendering="crispEdges"/>
<rect x="235.35" y="653.20" width="6.9" height="256.00" fill="#8bb734" shape-rendering="crispEdges"/>
<rect x="243.97" y="653.20" width="6.9" height="256.00" fill="#8bb734" shape-rendering="crispEdges"/>
<rect x="252.59" y="653.20" width="6.9" height="256.00" fill="#8bb734" shape-rendering="crispEdges"/>
<rect x="261.20" y="653.20" width="6.9" height="256.00" fill="#8bb734" shape-rendering="crispEdges"/>
<rect x="269.82" y="653.20" width="6.9" height="256.00" fill="#8bb734" shape-rendering="crispEdges"/>
<rect x="278.44" y="653.20" width="6.9" height="256.00" fill="#8bb734" shape-rendering="crispEdges"/>
<rect x="287.05" y="724.08" width="6.9" height="185.12" fill="#8bb734" shape-rendering="crispEdges"/>
<rect x="295.67" y="653.20" width="6.9" height="256.00" fill="#8bb734" shape-rendering="crispEdges"/>
<rect x="304.29" y="759.52" width="6.9" height="149.68" fill="#8bb734" shape-rendering="crispEdges"/>
<rect x="312.90" y="653.20" width="6.9" height="256.00" fill="#8bb734" shape-rendering="crispEdges"/>
<rect x="321.52" y="653.20" width="6.9" height="256.00" fill="#8bb734" shape-rendering="crispEdges"/>
<rect x="330.14" y="653.20" width="6.9" height="256.00" fill="#8bb734" shape-rendering="crispEdges"/>
<rect x="338.76" y="653.20" width="6.9" height="256.00" fill="#8bb734" shape-rendering="crispEdges"/>
<rect x="347.37" y="667.79" width="6.9" height="241.41" fill="#8bb734" shape-rendering="crispEdges"/>
<rect x="355.99" y="653.20" width="6.9" height="256.00" fill="#8bb734" shape-rendering="crispEdges"/>
<rect x="364.61" y="653.20" width="6.9" height="256.00" fill="#8bb734" shape-rendering="crispEdges"/>
<rect x="373.22" y="653.20" width="6.9" height="256.00" fill="#8bb734" shape-rendering="crispEdges"/>
<rect x="381.84" y="653.20" width="6.9" height="256.00" fill="#8bb734" shape-rendering="crispEdges"/>
<rect x="390.46" y="653.20" width="6.9" height="256.00" fill="#8bb734" shape-rendering="crispEdges"/>
<rect x="399.07" y="653.20" width="6.9" height="256.00" fill="#8bb734" shape-rendering="crispEdges"/>
<rect x="407.69" y="664.23" width="6.9" height="244.97" fill="#8bb734" shape-rendering="crispEdges"/>
<rect x="416.31" y="653.20" width="6.9" height="256.00" fill="#8bb734" shape-rendering="crispEdges"/>
<rect x="424.93" y="653.20" width="6.9" height="256.00" fill="#8bb734" shape-rendering="crispEdges"/>
<rect x="433.54" y="653.20" width="6.9" height="256.00" fill="#8bb734" shape-rendering="crispEdges"/>
<rect x="442.16" y="653.20" width="6.9" height="256.00" fill="#8bb734" shape-rendering="crispEdges"/>
<rect x="450.78" y="653.20" width="6.9" height="256.00" fill="#8bb734" shape-rendering="crispEdges"/>
<rect x="459.39" y="653.20" width="6.9" height="256.00" fill="#8bb734" shape-rendering="crispEdges"/>
<rect x="468.01" y="653.20" width="6.9" height="256.00" fill="#8bb734" shape-rendering="crispEdges"/>
<rect x="476.63" y="653.20" width="6.9" height="256.00" fill="#8bb734" shape-rendering="crispEdges"/>
<rect x="485.24" y="653.20" width="6.9" height="256.00" fill="#8bb734" shape-rendering="crispEdges"/>
<rect x="493.86" y="653.20" width="6.9" height="256.00" fill="#8bb734" shape-rendering="crispEdges"/>
<rect x="502.48" y="653.20" width="6.9" height="256.00" fill="#8bb734" shape-rendering="crispEdges"/>
<rect x="511.10" y="653.20" width="6.9" height="256.00" fill="#8bb734" shape-rendering="crispEdges"/>
<rect x="519.71" y="653.20" width="6.9" height="256.00" fill="#8bb734" shape-rendering="crispEdges"/>
<rect x="528.33" y="653.20" width="6.9" height="256.00" fill="#8bb734" shape-rendering="crispEdges"/>
<rect x="536.95" y="653.20" width="6.9" height="256.00" fill="#8bb734" shape-rendering="crispEdges"/>
<rect x="545.56" y="653.20" width="6.9" height="256.00" fill="#8bb734" shape-rendering="crispEdges"/>
<rect x="554.18" y="653.20" width="6.9" height="256.00" fill="#8bb734" shape-rendering="crispEdges"/>
<rect x="562.80" y="653.20" width="6.9" height="256.00" fill="#8bb734" shape-rendering="crispEdges"/>
<rect x="571.41" y="653.20" width="6.9" height="256.00" fill="#8bb734" shape-rendering="crispEdges"/>
<rect x="580.03" y="653.20" width="6.9" height="256.00" fill="#8bb734" shape-rendering="crispEdges"/>
<rect x="588.65" y="653.20" width="6.9" height="256.00" fill="#8bb734" shape-rendering="crispEdges"/>
<rect x="597.26" y="653.20" width="6.9" height="256.00" fill="#8bb734" shape-rendering="crispEdges"/>
<rect x="605.88" y="653.20" width="6.9" height="256.00" fill="#8bb734" shape-rendering="crispEdges"/>
<rect x="614.50" y="653.20" width="6.9" height="256.00" fill="#8bb734" shape-rendering="crispEdges"/>
<rect x="623.12" y="653.20" width="6.9" height="256.00" fill="#8bb734" shape-rendering="crispEdges"/>
<rect x="631.73" y="653.20" width="6.9" height="256.00" fill="#8bb734" shape-rendering="crispEdges"/>
<rect x="640.35" y="653.20" width="6.9" height="256.00" fill="#8bb734" shape-rendering="crispEdges"/>
<rect x="648.97" y="653.20" width="6.9" height="256.00" fill="#8bb734" shape-rendering="crispEdges"/>
<rect x="657.58" y="653.20" width="6.9" height="256.00" fill="#8bb734" shape-rendering="crispEdges"/>
<rect x="666.20" y="653.20" width="6.9" height="256.00" fill="#8bb734" shape-rendering="crispEdges"/>
<rect x="674.82" y="653.20" width="6.9" height="256.00" fill="#8bb734" shape-rendering="crispEdges"/>
<rect x="683.44" y="653.20" width="6.9" height="256.00" fill="#8bb734" shape-rendering="crispEdges"/>
<rect x="692.05" y="653.20" width="6.9" height="256.00" fill="#8bb734" shape-rendering="crispEdges"/>
<rect x="700.67" y="653.20" width="6.9" height="256.00" fill="#8bb734" shape-rendering="crispEdges"/>
<rect x="709.29" y="653.20" width="6.9" height="256.00" fill="#8bb734" shape-rendering="crispEdges"/>
<rect x="36.30" y="908" width="681.24" height="1" fill="#8c8c8c"/>
<rect x="35.80" y="908" width="1" height="4.5" fill="#8c8c8c"/>
<rect x="44.42" y="908" width="1" height="4.5" fill="#8c8c8c"/>
<rect x="53.03" y="908" width="1" height="4.5" fill="#8c8c8c"/>
<rect x="61.65" y="908" width="1" height="4.5" fill="#8c8c8c"/>
<rect x="70.27" y="908" width="1" height="4.5" fill="#8c8c8c"/>
<rect x="78.89" y="908" width="1" height="4.5" fill="#8c8c8c"/>
<rect x="87.50" y="908" width="1" height="4.5" fill="#8c8c8c"/>
<rect x="96.12" y="908" width="1" height="4.5" fill="#8c8c8c"/>
<rect x="104.74" y="908" width="1" height="4.5" fill="#8c8c8c"/>
<rect x="113.35" y="908" width="1" height="4.5" fill="#8c8c8c"/>
<rect x="121.97" y="908" width="1" height="4.5" fill="#8c8c8c"/>
<rect x="130.59" y="908" width="1" height="4.5" fill="#8c8c8c"/>
<rect x="139.20" y="908" width="1" height="4.5" fill="#8c8c8c"/>
<rect x="147.82" y="908" width="1" height="4.5" fill="#8c8c8c"/>
<rect x="156.44" y="908" width="1" height="4.5" fill="#8c8c8c"/>
<rect x="165.06" y="908" width="1" height="4.5" fill="#8c8c8c"/>
<rect x="173.67" y="908" width="1" height="4.5" fill="#8c8c8c"/>
<rect x="182.29" y="908" width="1" height="4.5" fill="#8c8c8c"/>
<rect x="190.91" y="908" width="1" height="4.5" fill="#8c8c8c"/>
<rect x="199.52" y="908" width="1" height="4.5" fill="#8c8c8c"/>
<rect x="208.14" y="908" width="1" height="4.5" fill="#8c8c8c"/>
<rect x="216.76" y="908" width="1" height="4.5" fill="#8c8c8c"/>
<rect x="225.37" y="908" width="1" height="4.5" fill="#8c8c8c"/>
<rect x="233.99" y="908" width="1" height="4.5" fill="#8c8c8c"/>
<rect x="242.61" y="908" width="1" height="4.5" fill="#8c8c8c"/>
<rect x="251.23" y="908" width="1" height="4.5" fill="#8c8c8c"/>
<rect x="259.84" y="908" width="1" height="4.5" fill="#8c8c8c"/>
<rect x="268.46" y="908" width="1" height="4.5" fill="#8c8c8c"/>
<rect x="277.08" y="908" width="1" height="4.5" fill="#8c8c8c"/>
<rect x="285.69" y="908" width="1" height="4.5" fill="#8c8c8c"/>
<rect x="294.31" y="908" width="1" height="4.5" fill="#8c8c8c"/>
<rect x="302.93" y="908" width="1" height="4.5" fill="#8c8c8c"/>
<rect x="311.54" y="908" width="1" height="4.5" fill="#8c8c8c"/>
<rect x="320.16" y="908" width="1" height="4.5" fill="#8c8c8c"/>
<rect x="328.78" y="908" width="1" height="4.5" fill="#8c8c8c"/>
<rect x="337.40" y="908" width="1" height="4.5" fill="#8c8c8c"/>
<rect x="346.01" y="908" width="1" height="4.5" fill="#8c8c8c"/>
<rect x="354.63" y="908" width="1" height="4.5" fill="#8c8c8c"/>
<rect x="363.25" y="908" width="1" height="4.5" fill="#8c8c8c"/>
<rect x="371.86" y="908" width="1" height="4.5" fill="#8c8c8c"/>
<rect x="380.48" y="908" width="1" height="4.5" fill="#8c8c8c"/>
<rect x="389.10" y="908" width="1" height="4.5" fill="#8c8c8c"/>
<rect x="397.71" y="908" width="1" height="4.5" fill="#8c8c8c"/>
<rect x="406.33" y="908" width="1" height="4.5" fill="#8c8c8c"/>
<rect x="414.95" y="908" width="1" height="4.5" fill="#8c8c8c"/>
<rect x="423.57" y="908" width="1" height="4.5" fill="#8c8c8c"/>
<rect x="432.18" y="908" width="1" height="4.5" fill="#8c8c8c"/>
<rect x="440.80" y="908" width="1" height="4.5" fill="#8c8c8c"/>
<rect x="449.42" y="908" width="1" height="4.5" fill="#8c8c8c"/>
<rect x="458.03" y="908" width="1" height="4.5" fill="#8c8c8c"/>
<rect x="466.65" y="908" width="1" height="4.5" fill="#8c8c8c"/>
<rect x="475.27" y="908" width="1" height="4.5" fill="#8c8c8c"/>
<rect x="483.88" y="908" width="1" height="4.5" fill="#8c8c8c"/>
<rect x="492.50" y="908" width="1" height="4.5" fill="#8c8c8c"/>
<rect x="501.12" y="908" width="1" height="4.5" fill="#8c8c8c"/>
<rect x="509.74" y="908" width="1" height="4.5" fill="#8c8c8c"/>
<rect x="518.35" y="908" width="1" height="4.5" fill="#8c8c8c"/>
<rect x="526.97" y="908" width="1" height="4.5" fill="#8c8c8c"/>
<rect x="535.59" y="908" width="1" height="4.5" fill="#8c8c8c"/>
<rect x="544.20" y="908" width="1" height="4.5" fill="#8c8c8c"/>
<rect x="552.82" y="908" width="1" height="4.5" fill="#8c8c8c"/>
<rect x="561.44" y="908" width="1" height="4.5" fill="#8c8c8c"/>
<rect x="570.05" y="908" width="1" height="4.5" fill="#8c8c8c"/>
<rect x="578.67" y="908" width="1" height="4.5" fill="#8c8c8c"/>
<rect x="587.29" y="908" width="1" height="4.5" fill="#8c8c8c"/>
<rect x="595.90" y="908" width="1" height="4.5" fill="#8c8c8c"/>
<rect x="604.52" y="908" width="1" height="4.5" fill="#8c8c8c"/>
<rect x="613.14" y="908" width="1" height="4.5" fill="#8c8c8c"/>
<rect x="621.76" y="908" width="1" height="4.5" fill="#8c8c8c"/>
<rect x="630.37" y="908" width="1" height="4.5" fill="#8c8c8c"/>
<rect x="638.99" y="908" width="1" height="4.5" fill="#8c8c8c"/>
<rect x="647.61" y="908" width="1" height="4.5" fill="#8c8c8c"/>
<rect x="656.22" y="908" width="1" height="4.5" fill="#8c8c8c"/>
<rect x="664.84" y="908" width="1" height="4.5" fill="#8c8c8c"/>
<rect x="673.46" y="908" width="1" height="4.5" fill="#8c8c8c"/>
<rect x="682.08" y="908" width="1" height="4.5" fill="#8c8c8c"/>
<rect x="690.69" y="908" width="1" height="4.5" fill="#8c8c8c"/>
<rect x="699.31" y="908" width="1" height="4.5" fill="#8c8c8c"/>
<rect x="707.93" y="908" width="1" height="4.5" fill="#8c8c8c"/>
<rect x="716.54" y="908" width="1" height="4.5" fill="#8c8c8c"/>
<text x="40.61" y="645.60" font-size="9.7" text-anchor="middle" fill="#000">9 000</text>
<text x="49.23" y="787.39" font-size="9.7" text-anchor="middle" fill="#000">4 015</text>
<text x="57.84" y="645.60" font-size="9.7" text-anchor="middle" fill="#000">9 000</text>
<text x="66.46" y="645.60" font-size="9.7" text-anchor="middle" fill="#000">9 000</text>
<text x="75.08" y="657.40" font-size="9.7" text-anchor="middle" fill="#000">8 585</text>
<text x="83.69" y="645.60" font-size="9.7" text-anchor="middle" fill="#000">9 000</text>
<text x="92.31" y="669.23" font-size="9.7" text-anchor="middle" fill="#000">8 169</text>
<text x="100.93" y="799.20" font-size="9.7" text-anchor="middle" fill="#000">3 600</text>
<text x="109.54" y="645.60" font-size="9.7" text-anchor="middle" fill="#000">9 000</text>
<text x="118.16" y="645.60" font-size="9.7" text-anchor="middle" fill="#000">9 000</text>
<text x="126.78" y="645.60" font-size="9.7" text-anchor="middle" fill="#000">9 000</text>
<text x="135.40" y="692.87" font-size="9.7" text-anchor="middle" fill="#000">7 338</text>
<text x="144.01" y="645.60" font-size="9.7" text-anchor="middle" fill="#000">9 000</text>
<text x="152.63" y="645.60" font-size="9.7" text-anchor="middle" fill="#000">9 000</text>
<text x="161.25" y="645.60" font-size="9.7" text-anchor="middle" fill="#000">9 000</text>
<text x="169.86" y="645.60" font-size="9.7" text-anchor="middle" fill="#000">9 000</text>
<text x="178.48" y="645.60" font-size="9.7" text-anchor="middle" fill="#000">9 000</text>
<text x="187.10" y="704.68" font-size="9.7" text-anchor="middle" fill="#000">6 923</text>
<text x="195.71" y="645.60" font-size="9.7" text-anchor="middle" fill="#000">9 000</text>
<text x="204.33" y="751.92" font-size="9.7" text-anchor="middle" fill="#000">5 262</text>
<text x="212.95" y="645.60" font-size="9.7" text-anchor="middle" fill="#000">9 000</text>
<text x="221.57" y="645.60" font-size="9.7" text-anchor="middle" fill="#000">9 000</text>
<text x="230.18" y="645.60" font-size="9.7" text-anchor="middle" fill="#000">9 000</text>
<text x="238.80" y="645.60" font-size="9.7" text-anchor="middle" fill="#000">9 000</text>
<text x="247.42" y="645.60" font-size="9.7" text-anchor="middle" fill="#000">9 000</text>
<text x="256.03" y="645.60" font-size="9.7" text-anchor="middle" fill="#000">9 000</text>
<text x="264.65" y="645.60" font-size="9.7" text-anchor="middle" fill="#000">9 000</text>
<text x="273.27" y="645.60" font-size="9.7" text-anchor="middle" fill="#000">9 000</text>
<text x="281.88" y="645.60" font-size="9.7" text-anchor="middle" fill="#000">9 000</text>
<text x="290.50" y="716.48" font-size="9.7" text-anchor="middle" fill="#000">6 508</text>
<text x="299.12" y="645.60" font-size="9.7" text-anchor="middle" fill="#000">9 000</text>
<text x="307.74" y="751.92" font-size="9.7" text-anchor="middle" fill="#000">5 262</text>
<text x="316.35" y="645.60" font-size="9.7" text-anchor="middle" fill="#000">9 000</text>
<text x="324.97" y="645.60" font-size="9.7" text-anchor="middle" fill="#000">9 000</text>
<text x="333.59" y="645.60" font-size="9.7" text-anchor="middle" fill="#000">9 000</text>
<text x="342.20" y="645.60" font-size="9.7" text-anchor="middle" fill="#000">9 000</text>
<text x="350.82" y="660.19" font-size="9.7" text-anchor="middle" fill="#000">8 487</text>
<text x="359.44" y="645.60" font-size="9.7" text-anchor="middle" fill="#000">9 000</text>
<text x="368.05" y="645.60" font-size="9.7" text-anchor="middle" fill="#000">9 000</text>
<text x="376.67" y="645.60" font-size="9.7" text-anchor="middle" fill="#000">9 000</text>
<text x="385.29" y="645.60" font-size="9.7" text-anchor="middle" fill="#000">9 000</text>
<text x="393.91" y="645.60" font-size="9.7" text-anchor="middle" fill="#000">9 000</text>
<text x="402.52" y="645.60" font-size="9.7" text-anchor="middle" fill="#000">9 000</text>
<text x="411.14" y="656.63" font-size="9.7" text-anchor="middle" fill="#000">8 612</text>
<text x="419.76" y="645.60" font-size="9.7" text-anchor="middle" fill="#000">9 000</text>
<text x="428.37" y="645.60" font-size="9.7" text-anchor="middle" fill="#000">9 000</text>
<text x="436.99" y="645.60" font-size="9.7" text-anchor="middle" fill="#000">9 000</text>
<text x="445.61" y="645.60" font-size="9.7" text-anchor="middle" fill="#000">9 000</text>
<text x="454.22" y="645.60" font-size="9.7" text-anchor="middle" fill="#000">9 000</text>
<text x="462.84" y="645.60" font-size="9.7" text-anchor="middle" fill="#000">9 000</text>
<text x="471.46" y="645.60" font-size="9.7" text-anchor="middle" fill="#000">9 000</text>
<text x="480.08" y="645.60" font-size="9.7" text-anchor="middle" fill="#000">9 000</text>
<text x="488.69" y="645.60" font-size="9.7" text-anchor="middle" fill="#000">9 000</text>
<text x="497.31" y="645.60" font-size="9.7" text-anchor="middle" fill="#000">9 000</text>
<text x="505.93" y="645.60" font-size="9.7" text-anchor="middle" fill="#000">9 000</text>
<text x="514.54" y="645.60" font-size="9.7" text-anchor="middle" fill="#000">9 000</text>
<text x="523.16" y="645.60" font-size="9.7" text-anchor="middle" fill="#000">9 000</text>
<text x="531.78" y="645.60" font-size="9.7" text-anchor="middle" fill="#000">9 000</text>
<text x="540.39" y="645.60" font-size="9.7" text-anchor="middle" fill="#000">9 000</text>
<text x="549.01" y="645.60" font-size="9.7" text-anchor="middle" fill="#000">9 000</text>
<text x="557.63" y="645.60" font-size="9.7" text-anchor="middle" fill="#000">9 000</text>
<text x="566.25" y="645.60" font-size="9.7" text-anchor="middle" fill="#000">9 000</text>
<text x="574.86" y="645.60" font-size="9.7" text-anchor="middle" fill="#000">9 000</text>
<text x="583.48" y="645.60" font-size="9.7" text-anchor="middle" fill="#000">9 000</text>
<text x="592.10" y="645.60" font-size="9.7" text-anchor="middle" fill="#000">9 000</text>
<text x="600.71" y="645.60" font-size="9.7" text-anchor="middle" fill="#000">9 000</text>
<text x="609.33" y="645.60" font-size="9.7" text-anchor="middle" fill="#000">9 000</text>
<text x="617.95" y="645.60" font-size="9.7" text-anchor="middle" fill="#000">9 000</text>
<text x="626.56" y="645.60" font-size="9.7" text-anchor="middle" fill="#000">9 000</text>
<text x="635.18" y="645.60" font-size="9.7" text-anchor="middle" fill="#000">9 000</text>
<text x="643.80" y="645.60" font-size="9.7" text-anchor="middle" fill="#000">9 000</text>
<text x="652.42" y="645.60" font-size="9.7" text-anchor="middle" fill="#000">9 000</text>
<text x="661.03" y="645.60" font-size="9.7" text-anchor="middle" fill="#000">9 000</text>
<text x="669.65" y="645.60" font-size="9.7" text-anchor="middle" fill="#000">9 000</text>
<text x="678.27" y="645.60" font-size="9.7" text-anchor="middle" fill="#000">9 000</text>
<text x="686.88" y="645.60" font-size="9.7" text-anchor="middle" fill="#000">9 000</text>
<text x="695.50" y="645.60" font-size="9.7" text-anchor="middle" fill="#000">9 000</text>
<text x="704.12" y="645.60" font-size="9.7" text-anchor="middle" fill="#000">9 000</text>
<text x="712.73" y="645.60" font-size="9.7" text-anchor="middle" fill="#000">9 000</text>
<text transform="translate(45.01,948.9) rotate(-90)" font-size="10" fill="#000">201201</text>
<text transform="translate(62.24,948.9) rotate(-90)" font-size="10" fill="#000">201203</text>
<text transform="translate(79.48,948.9) rotate(-90)" font-size="10" fill="#000">201205</text>
<text transform="translate(96.71,948.9) rotate(-90)" font-size="10" fill="#000">201207</text>
<text transform="translate(113.94,948.9) rotate(-90)" font-size="10" fill="#000">201209</text>
<text transform="translate(131.18,948.9) rotate(-90)" font-size="10" fill="#000">201211</text>
<text transform="translate(148.41,948.9) rotate(-90)" font-size="10" fill="#000">201301</text>
<text transform="translate(165.65,948.9) rotate(-90)" font-size="10" fill="#000">201303</text>
<text transform="translate(182.88,948.9) rotate(-90)" font-size="10" fill="#000">201305</text>
<text transform="translate(200.11,948.9) rotate(-90)" font-size="10" fill="#000">201307</text>
<text transform="translate(217.35,948.9) rotate(-90)" font-size="10" fill="#000">201309</text>
<text transform="translate(234.58,948.9) rotate(-90)" font-size="10" fill="#000">201311</text>
<text transform="translate(251.82,948.9) rotate(-90)" font-size="10" fill="#000">201401</text>
<text transform="translate(269.05,948.9) rotate(-90)" font-size="10" fill="#000">201403</text>
<text transform="translate(286.28,948.9) rotate(-90)" font-size="10" fill="#000">201405</text>
<text transform="translate(303.52,948.9) rotate(-90)" font-size="10" fill="#000">201407</text>
<text transform="translate(320.75,948.9) rotate(-90)" font-size="10" fill="#000">201409</text>
<text transform="translate(337.99,948.9) rotate(-90)" font-size="10" fill="#000">201411</text>
<text transform="translate(355.22,948.9) rotate(-90)" font-size="10" fill="#000">201501</text>
<text transform="translate(372.45,948.9) rotate(-90)" font-size="10" fill="#000">201503</text>
<text transform="translate(389.69,948.9) rotate(-90)" font-size="10" fill="#000">201505</text>
<text transform="translate(406.92,948.9) rotate(-90)" font-size="10" fill="#000">201507</text>
<text transform="translate(424.16,948.9) rotate(-90)" font-size="10" fill="#000">201509</text>
<text transform="translate(441.39,948.9) rotate(-90)" font-size="10" fill="#000">201511</text>
<text transform="translate(458.62,948.9) rotate(-90)" font-size="10" fill="#000">201601</text>
<text transform="translate(475.86,948.9) rotate(-90)" font-size="10" fill="#000">201603</text>
<text transform="translate(493.09,948.9) rotate(-90)" font-size="10" fill="#000">201605</text>
<text transform="translate(510.33,948.9) rotate(-90)" font-size="10" fill="#000">201607</text>
<text transform="translate(527.56,948.9) rotate(-90)" font-size="10" fill="#000">201609</text>
<text transform="translate(544.79,948.9) rotate(-90)" font-size="10" fill="#000">201611</text>
<text transform="translate(562.03,948.9) rotate(-90)" font-size="10" fill="#000">201701</text>
<text transform="translate(579.26,948.9) rotate(-90)" font-size="10" fill="#000">201703</text>
<text transform="translate(596.50,948.9) rotate(-90)" font-size="10" fill="#000">201705</text>
<text transform="translate(613.73,948.9) rotate(-90)" font-size="10" fill="#000">201707</text>
<text transform="translate(630.96,948.9) rotate(-90)" font-size="10" fill="#000">201709</text>
<text transform="translate(648.20,948.9) rotate(-90)" font-size="10" fill="#000">201711</text>
<text transform="translate(665.43,948.9) rotate(-90)" font-size="10" fill="#000">201801</text>
<text transform="translate(682.67,948.9) rotate(-90)" font-size="10" fill="#000">201803</text>
<text transform="translate(699.90,948.9) rotate(-90)" font-size="10" fill="#000">201805</text>
<text transform="translate(717.13,948.9) rotate(-90)" font-size="10" fill="#000">201807</text>
<rect x="869.40" y="629.20" width="1" height="299.17" fill="#8c8c8c"/>
<rect x="937.60" y="629.20" width="1" height="299.17" fill="#8c8c8c"/>
<rect x="1005.80" y="629.20" width="1" height="299.17" fill="#8c8c8c"/>
<rect x="1074.00" y="629.20" width="1" height="299.17" fill="#8c8c8c"/>
<rect x="801.70" y="925.08" width="206.04" height="2.8" fill="#8bb734" shape-rendering="crispEdges"/>
<rect x="801.70" y="921.29" width="206.04" height="2.8" fill="#8bb734" shape-rendering="crispEdges"/>
<rect x="801.70" y="917.51" width="206.04" height="2.8" fill="#8bb734" shape-rendering="crispEdges"/>
<rect x="801.70" y="913.72" width="206.04" height="2.8" fill="#8bb734" shape-rendering="crispEdges"/>
<rect x="801.70" y="909.93" width="206.04" height="2.8" fill="#8bb734" shape-rendering="crispEdges"/>
<rect x="801.70" y="906.14" width="206.04" height="2.8" fill="#8bb734" shape-rendering="crispEdges"/>
<rect x="801.70" y="902.36" width="206.04" height="2.8" fill="#8bb734" shape-rendering="crispEdges"/>
<rect x="801.70" y="898.57" width="206.04" height="2.8" fill="#8bb734" shape-rendering="crispEdges"/>
<rect x="801.70" y="894.78" width="206.04" height="2.8" fill="#8bb734" shape-rendering="crispEdges"/>
<rect x="801.70" y="891.00" width="206.04" height="2.8" fill="#8bb734" shape-rendering="crispEdges"/>
<rect x="801.70" y="887.21" width="206.04" height="2.8" fill="#8bb734" shape-rendering="crispEdges"/>
<rect x="801.70" y="883.42" width="206.04" height="2.8" fill="#8bb734" shape-rendering="crispEdges"/>
<rect x="801.70" y="879.64" width="206.04" height="2.8" fill="#8bb734" shape-rendering="crispEdges"/>
<rect x="801.70" y="875.85" width="206.04" height="2.8" fill="#8bb734" shape-rendering="crispEdges"/>
<rect x="801.70" y="872.06" width="206.04" height="2.8" fill="#8bb734" shape-rendering="crispEdges"/>
<rect x="801.70" y="868.27" width="206.04" height="2.8" fill="#8bb734" shape-rendering="crispEdges"/>
<rect x="801.70" y="864.49" width="206.04" height="2.8" fill="#8bb734" shape-rendering="crispEdges"/>
<rect x="801.70" y="860.70" width="206.04" height="2.8" fill="#8bb734" shape-rendering="crispEdges"/>
<rect x="801.70" y="856.91" width="206.04" height="2.8" fill="#8bb734" shape-rendering="crispEdges"/>
<rect x="801.70" y="853.13" width="206.04" height="2.8" fill="#8bb734" shape-rendering="crispEdges"/>
<rect x="801.70" y="849.34" width="206.04" height="2.8" fill="#8bb734" shape-rendering="crispEdges"/>
<rect x="801.70" y="845.55" width="206.04" height="2.8" fill="#8bb734" shape-rendering="crispEdges"/>
<rect x="801.70" y="841.77" width="206.04" height="2.8" fill="#8bb734" shape-rendering="crispEdges"/>
<rect x="801.70" y="837.98" width="206.04" height="2.8" fill="#8bb734" shape-rendering="crispEdges"/>
<rect x="801.70" y="834.19" width="206.04" height="2.8" fill="#8bb734" shape-rendering="crispEdges"/>
<rect x="801.70" y="830.40" width="206.04" height="2.8" fill="#8bb734" shape-rendering="crispEdges"/>
<rect x="801.70" y="826.62" width="206.04" height="2.8" fill="#8bb734" shape-rendering="crispEdges"/>
<rect x="801.70" y="822.83" width="206.04" height="2.8" fill="#8bb734" shape-rendering="crispEdges"/>
<rect x="801.70" y="819.04" width="206.04" height="2.8" fill="#8bb734" shape-rendering="crispEdges"/>
<rect x="801.70" y="815.26" width="206.04" height="2.8" fill="#8bb734" shape-rendering="crispEdges"/>
<rect x="801.70" y="811.47" width="206.04" height="2.8" fill="#8bb734" shape-rendering="crispEdges"/>
<rect x="801.70" y="807.68" width="206.04" height="2.8" fill="#8bb734" shape-rendering="crispEdges"/>
<rect x="801.70" y="803.90" width="206.04" height="2.8" fill="#8bb734" shape-rendering="crispEdges"/>
<rect x="801.70" y="800.11" width="206.04" height="2.8" fill="#8bb734" shape-rendering="crispEdges"/>
<rect x="801.70" y="796.32" width="206.04" height="2.8" fill="#8bb734" shape-rendering="crispEdges"/>
<rect x="801.70" y="792.53" width="206.04" height="2.8" fill="#8bb734" shape-rendering="crispEdges"/>
<rect x="801.70" y="788.75" width="206.04" height="2.8" fill="#8bb734" shape-rendering="crispEdges"/>
<rect x="801.70" y="784.96" width="206.04" height="2.8" fill="#8bb734" shape-rendering="crispEdges"/>
<rect x="801.70" y="781.17" width="206.04" height="2.8" fill="#8bb734" shape-rendering="crispEdges"/>
<rect x="801.70" y="777.39" width="206.04" height="2.8" fill="#8bb734" shape-rendering="crispEdges"/>
<rect x="801.70" y="773.60" width="206.04" height="2.8" fill="#8bb734" shape-rendering="crispEdges"/>
<rect x="801.70" y="769.81" width="206.04" height="2.8" fill="#8bb734" shape-rendering="crispEdges"/>
<rect x="801.70" y="766.03" width="206.04" height="2.8" fill="#8bb734" shape-rendering="crispEdges"/>
<rect x="801.70" y="762.24" width="206.04" height="2.8" fill="#8bb734" shape-rendering="crispEdges"/>
<rect x="801.70" y="758.45" width="206.04" height="2.8" fill="#8bb734" shape-rendering="crispEdges"/>
<rect x="801.70" y="754.66" width="206.04" height="2.8" fill="#8bb734" shape-rendering="crispEdges"/>
<rect x="801.70" y="750.88" width="206.04" height="2.8" fill="#8bb734" shape-rendering="crispEdges"/>
<rect x="801.70" y="747.09" width="206.04" height="2.8" fill="#8bb734" shape-rendering="crispEdges"/>
<rect x="801.70" y="743.30" width="206.04" height="2.8" fill="#8bb734" shape-rendering="crispEdges"/>
<rect x="801.70" y="739.52" width="206.04" height="2.8" fill="#8bb734" shape-rendering="crispEdges"/>
<rect x="801.70" y="735.73" width="206.04" height="2.8" fill="#8bb734" shape-rendering="crispEdges"/>
<rect x="801.70" y="731.94" width="206.04" height="2.8" fill="#8bb734" shape-rendering="crispEdges"/>
<rect x="801.70" y="728.16" width="206.04" height="2.8" fill="#8bb734" shape-rendering="crispEdges"/>
<rect x="801.70" y="724.37" width="206.04" height="2.8" fill="#8bb734" shape-rendering="crispEdges"/>
<rect x="801.70" y="720.58" width="111.34" height="2.8" fill="#8bb734" shape-rendering="crispEdges"/>
<rect x="801.70" y="716.79" width="111.34" height="2.8" fill="#8bb734" shape-rendering="crispEdges"/>
<rect x="801.70" y="713.01" width="206.04" height="2.8" fill="#8bb734" shape-rendering="crispEdges"/>
<rect x="801.70" y="709.22" width="206.04" height="2.8" fill="#8bb734" shape-rendering="crispEdges"/>
<rect x="801.70" y="705.43" width="206.04" height="2.8" fill="#8bb734" shape-rendering="crispEdges"/>
<rect x="801.70" y="701.65" width="178.07" height="2.8" fill="#8bb734" shape-rendering="crispEdges"/>
<rect x="801.70" y="697.86" width="206.04" height="2.8" fill="#8bb734" shape-rendering="crispEdges"/>
<rect x="801.70" y="694.07" width="206.04" height="2.8" fill="#8bb734" shape-rendering="crispEdges"/>
<rect x="801.70" y="690.29" width="206.04" height="2.8" fill="#8bb734" shape-rendering="crispEdges"/>
<rect x="801.70" y="686.50" width="206.04" height="2.8" fill="#8bb734" shape-rendering="crispEdges"/>
<rect x="801.70" y="682.71" width="159.65" height="2.8" fill="#8bb734" shape-rendering="crispEdges"/>
<rect x="801.70" y="678.92" width="206.04" height="2.8" fill="#8bb734" shape-rendering="crispEdges"/>
<rect x="801.70" y="675.14" width="63.18" height="2.8" fill="#8bb734" shape-rendering="crispEdges"/>
<rect x="801.70" y="671.35" width="206.04" height="2.8" fill="#8bb734" shape-rendering="crispEdges"/>
<rect x="801.70" y="667.56" width="206.04" height="2.8" fill="#8bb734" shape-rendering="crispEdges"/>
<rect x="801.70" y="663.78" width="206.04" height="2.8" fill="#8bb734" shape-rendering="crispEdges"/>
<rect x="801.70" y="659.99" width="206.04" height="2.8" fill="#8bb734" shape-rendering="crispEdges"/>
<rect x="801.70" y="656.20" width="159.65" height="2.8" fill="#8bb734" shape-rendering="crispEdges"/>
<rect x="801.70" y="652.42" width="159.65" height="2.8" fill="#8bb734" shape-rendering="crispEdges"/>
<rect x="801.70" y="648.63" width="206.04" height="2.8" fill="#8bb734" shape-rendering="crispEdges"/>
<rect x="801.70" y="644.84" width="206.04" height="2.8" fill="#8bb734" shape-rendering="crispEdges"/>
<rect x="801.70" y="641.05" width="206.04" height="2.8" fill="#8bb734" shape-rendering="crispEdges"/>
<rect x="801.70" y="637.27" width="159.65" height="2.8" fill="#8bb734" shape-rendering="crispEdges"/>
<rect x="801.70" y="633.48" width="206.04" height="2.8" fill="#8bb734" shape-rendering="crispEdges"/>
<rect x="801.70" y="629.69" width="63.18" height="2.8" fill="#8bb734" shape-rendering="crispEdges"/>
<rect x="801.20" y="629.20" width="1" height="299.17" fill="#8c8c8c"/>
<rect x="797.20" y="628.70" width="4.5" height="1" fill="#8c8c8c"/>
<rect x="797.20" y="632.49" width="4.5" height="1" fill="#8c8c8c"/>
<rect x="797.20" y="636.27" width="4.5" height="1" fill="#8c8c8c"/>
<rect x="797.20" y="640.06" width="4.5" height="1" fill="#8c8c8c"/>
<rect x="797.20" y="643.85" width="4.5" height="1" fill="#8c8c8c"/>
<rect x="797.20" y="647.63" width="4.5" height="1" fill="#8c8c8c"/>
<rect x="797.20" y="651.42" width="4.5" height="1" fill="#8c8c8c"/>
<rect x="797.20" y="655.21" width="4.5" height="1" fill="#8c8c8c"/>
<rect x="797.20" y="659.00" width="4.5" height="1" fill="#8c8c8c"/>
<rect x="797.20" y="662.78" width="4.5" height="1" fill="#8c8c8c"/>
<rect x="797.20" y="666.57" width="4.5" height="1" fill="#8c8c8c"/>
<rect x="797.20" y="670.36" width="4.5" height="1" fill="#8c8c8c"/>
<rect x="797.20" y="674.14" width="4.5" height="1" fill="#8c8c8c"/>
<rect x="797.20" y="677.93" width="4.5" height="1" fill="#8c8c8c"/>
<rect x="797.20" y="681.72" width="4.5" height="1" fill="#8c8c8c"/>
<rect x="797.20" y="685.50" width="4.5" height="1" fill="#8c8c8c"/>
<rect x="797.20" y="689.29" width="4.5" height="1" fill="#8c8c8c"/>
<rect x="797.20" y="693.08" width="4.5" height="1" fill="#8c8c8c"/>
<rect x="797.20" y="696.87" width="4.5" height="1" fill="#8c8c8c"/>
<rect x="797.20" y="700.65" width="4.5" height="1" fill="#8c8c8c"/>
<rect x="797.20" y="704.44" width="4.5" height="1" fill="#8c8c8c"/>
<rect x="797.20" y="708.23" width="4.5" height="1" fill="#8c8c8c"/>
<rect x="797.20" y="712.01" width="4.5" height="1" fill="#8c8c8c"/>
<rect x="797.20" y="715.80" width="4.5" height="1" fill="#8c8c8c"/>
<rect x="797.20" y="719.59" width="4.5" height="1" fill="#8c8c8c"/>
<rect x="797.20" y="723.38" width="4.5" height="1" fill="#8c8c8c"/>
<rect x="797.20" y="727.16" width="4.5" height="1" fill="#8c8c8c"/>
<rect x="797.20" y="730.95" width="4.5" height="1" fill="#8c8c8c"/>
<rect x="797.20" y="734.74" width="4.5" height="1" fill="#8c8c8c"/>
<rect x="797.20" y="738.52" width="4.5" height="1" fill="#8c8c8c"/>
<rect x="797.20" y="742.31" width="4.5" height="1" fill="#8c8c8c"/>
<rect x="797.20" y="746.10" width="4.5" height="1" fill="#8c8c8c"/>
<rect x="797.20" y="749.88" width="4.5" height="1" fill="#8c8c8c"/>
<rect x="797.20" y="753.67" width="4.5" height="1" fill="#8c8c8c"/>
<rect x="797.20" y="757.46" width="4.5" height="1" fill="#8c8c8c"/>
<rect x="797.20" y="761.25" width="4.5" height="1" fill="#8c8c8c"/>
<rect x="797.20" y="765.03" width="4.5" height="1" fill="#8c8c8c"/>
<rect x="797.20" y="768.82" width="4.5" height="1" fill="#8c8c8c"/>
<rect x="797.20" y="772.61" width="4.5" height="1" fill="#8c8c8c"/>
<rect x="797.20" y="776.39" width="4.5" height="1" fill="#8c8c8c"/>
<rect x="797.20" y="780.18" width="4.5" height="1" fill="#8c8c8c"/>
<rect x="797.20" y="783.97" width="4.5" height="1" fill="#8c8c8c"/>
<rect x="797.20" y="787.75" width="4.5" height="1" fill="#8c8c8c"/>
<rect x="797.20" y="791.54" width="4.5" height="1" fill="#8c8c8c"/>
<rect x="797.20" y="795.33" width="4.5" height="1" fill="#8c8c8c"/>
<rect x="797.20" y="799.12" width="4.5" height="1" fill="#8c8c8c"/>
<rect x="797.20" y="802.90" width="4.5" height="1" fill="#8c8c8c"/>
<rect x="797.20" y="806.69" width="4.5" height="1" fill="#8c8c8c"/>
<rect x="797.20" y="810.48" width="4.5" height="1" fill="#8c8c8c"/>
<rect x="797.20" y="814.26" width="4.5" height="1" fill="#8c8c8c"/>
<rect x="797.20" y="818.05" width="4.5" height="1" fill="#8c8c8c"/>
<rect x="797.20" y="821.84" width="4.5" height="1" fill="#8c8c8c"/>
<rect x="797.20" y="825.62" width="4.5" height="1" fill="#8c8c8c"/>
<rect x="797.20" y="829.41" width="4.5" height="1" fill="#8c8c8c"/>
<rect x="797.20" y="833.20" width="4.5" height="1" fill="#8c8c8c"/>
<rect x="797.20" y="836.99" width="4.5" height="1" fill="#8c8c8c"/>
<rect x="797.20" y="840.77" width="4.5" height="1" fill="#8c8c8c"/>
<rect x="797.20" y="844.56" width="4.5" height="1" fill="#8c8c8c"/>
<rect x="797.20" y="848.35" width="4.5" height="1" fill="#8c8c8c"/>
<rect x="797.20" y="852.13" width="4.5" height="1" fill="#8c8c8c"/>
<rect x="797.20" y="855.92" width="4.5" height="1" fill="#8c8c8c"/>
<rect x="797.20" y="859.71" width="4.5" height="1" fill="#8c8c8c"/>
<rect x="797.20" y="863.49" width="4.5" height="1" fill="#8c8c8c"/>
<rect x="797.20" y="867.28" width="4.5" height="1" fill="#8c8c8c"/>
<rect x="797.20" y="871.07" width="4.5" height="1" fill="#8c8c8c"/>
<rect x="797.20" y="874.86" width="4.5" height="1" fill="#8c8c8c"/>
<rect x="797.20" y="878.64" width="4.5" height="1" fill="#8c8c8c"/>
<rect x="797.20" y="882.43" width="4.5" height="1" fill="#8c8c8c"/>
<rect x="797.20" y="886.22" width="4.5" height="1" fill="#8c8c8c"/>
<rect x="797.20" y="890.00" width="4.5" height="1" fill="#8c8c8c"/>
<rect x="797.20" y="893.79" width="4.5" height="1" fill="#8c8c8c"/>
<rect x="797.20" y="897.58" width="4.5" height="1" fill="#8c8c8c"/>
<rect x="797.20" y="901.36" width="4.5" height="1" fill="#8c8c8c"/>
<rect x="797.20" y="905.15" width="4.5" height="1" fill="#8c8c8c"/>
<rect x="797.20" y="908.94" width="4.5" height="1" fill="#8c8c8c"/>
<rect x="797.20" y="912.73" width="4.5" height="1" fill="#8c8c8c"/>
<rect x="797.20" y="916.51" width="4.5" height="1" fill="#8c8c8c"/>
<rect x="797.20" y="920.30" width="4.5" height="1" fill="#8c8c8c"/>
<rect x="797.20" y="924.09" width="4.5" height="1" fill="#8c8c8c"/>
<rect x="797.20" y="927.87" width="4.5" height="1" fill="#8c8c8c"/>
<rect x="801.20" y="927.87" width="273.80" height="1" fill="#8c8c8c"/>
<rect x="801.20" y="928.37" width="1" height="4" fill="#8c8c8c"/>
<text x="801.70" y="947.3" font-size="10" text-anchor="middle" fill="#000">0</text>
<rect x="869.40" y="928.37" width="1" height="4" fill="#8c8c8c"/>
<text x="869.90" y="947.3" font-size="10" text-anchor="middle" fill="#000">50</text>
<rect x="937.60" y="928.37" width="1" height="4" fill="#8c8c8c"/>
<text x="938.10" y="947.3" font-size="10" text-anchor="middle" fill="#000">100</text>
<rect x="1005.80" y="928.37" width="1" height="4" fill="#8c8c8c"/>
<text x="1006.30" y="947.3" font-size="10" text-anchor="middle" fill="#000">150</text>
<rect x="1074.00" y="928.37" width="1" height="4" fill="#8c8c8c"/>
<text x="1074.50" y="947.3" font-size="10" text-anchor="middle" fill="#000">200</text>
<text x="790.6" y="931.18" font-size="10" text-anchor="end" fill="#000">201201</text>
<text x="790.6" y="916.03" font-size="10" text-anchor="end" fill="#000">201205</text>
<text x="790.6" y="900.88" font-size="10" text-anchor="end" fill="#000">201209</text>
<text x="790.6" y="885.74" font-size="10" text-anchor="end" fill="#000">201301</text>
<text x="790.6" y="870.59" font-size="10" text-anchor="end" fill="#000">201305</text>
<text x="790.6" y="855.44" font-size="10" text-anchor="end" fill="#000">201309</text>
<text x="790.6" y="840.29" font-size="10" text-anchor="end" fill="#000">201401</text>
<text x="790.6" y="825.14" font-size="10" text-anchor="end" fill="#000">201405</text>
<text x="790.6" y="810.00" font-size="10" text-anchor="end" fill="#000">201409</text>
<text x="790.6" y="794.85" font-size="10" text-anchor="end" fill="#000">201501</text>
<text x="790.6" y="779.70" font-size="10" text-anchor="end" fill="#000">201505</text>
<text x="790.6" y="764.55" font-size="10" text-anchor="end" fill="#000">201509</text>
<text x="790.6" y="749.40" font-size="10" text-anchor="end" fill="#000">201601</text>
<text x="790.6" y="734.26" font-size="10" text-anchor="end" fill="#000">201605</text>
<text x="790.6" y="719.11" font-size="10" text-anchor="end" fill="#000">201609</text>
<text x="790.6" y="703.96" font-size="10" text-anchor="end" fill="#000">201701</text>
<text x="790.6" y="688.81" font-size="10" text-anchor="end" fill="#000">201705</text>
<text x="790.6" y="673.66" font-size="10" text-anchor="end" fill="#000">201709</text>
<text x="790.6" y="658.52" font-size="10" text-anchor="end" fill="#000">201801</text>
<text x="790.6" y="643.37" font-size="10" text-anchor="end" fill="#000">201805</text>
<rect x="1118.50" y="904.00" width="327.61" height="1" fill="#8c8c8c"/>
<rect x="1118.00" y="904.50" width="1" height="4" fill="#8c8c8c"/>
<rect x="1122.15" y="904.50" width="1" height="4" fill="#8c8c8c"/>
<rect x="1126.29" y="904.50" width="1" height="4" fill="#8c8c8c"/>
<rect x="1130.44" y="904.50" width="1" height="4" fill="#8c8c8c"/>
<rect x="1134.59" y="904.50" width="1" height="4" fill="#8c8c8c"/>
<rect x="1138.73" y="904.50" width="1" height="4" fill="#8c8c8c"/>
<rect x="1142.88" y="904.50" width="1" height="4" fill="#8c8c8c"/>
<rect x="1147.03" y="904.50" width="1" height="4" fill="#8c8c8c"/>
<rect x="1151.18" y="904.50" width="1" height="4" fill="#8c8c8c"/>
<rect x="1155.32" y="904.50" width="1" height="4" fill="#8c8c8c"/>
<rect x="1159.47" y="904.50" width="1" height="4" fill="#8c8c8c"/>
<rect x="1163.62" y="904.50" width="1" height="4" fill="#8c8c8c"/>
<rect x="1167.76" y="904.50" width="1" height="4" fill="#8c8c8c"/>
<rect x="1171.91" y="904.50" width="1" height="4" fill="#8c8c8c"/>
<rect x="1176.06" y="904.50" width="1" height="4" fill="#8c8c8c"/>
<rect x="1180.20" y="904.50" width="1" height="4" fill="#8c8c8c"/>
<rect x="1184.35" y="904.50" width="1" height="4" fill="#8c8c8c"/>
<rect x="1188.50" y="904.50" width="1" height="4" fill="#8c8c8c"/>
<rect x="1192.65" y="904.50" width="1" height="4" fill="#8c8c8c"/>
<rect x="1196.79" y="904.50" width="1" height="4" fill="#8c8c8c"/>
<rect x="1200.94" y="904.50" width="1" height="4" fill="#8c8c8c"/>
<rect x="1205.09" y="904.50" width="1" height="4" fill="#8c8c8c"/>
<rect x="1209.23" y="904.50" width="1" height="4" fill="#8c8c8c"/>
<rect x="1213.38" y="904.50" width="1" height="4" fill="#8c8c8c"/>
<rect x="1217.53" y="904.50" width="1" height="4" fill="#8c8c8c"/>
<rect x="1221.67" y="904.50" width="1" height="4" fill="#8c8c8c"/>
<rect x="1225.82" y="904.50" width="1" height="4" fill="#8c8c8c"/>
<rect x="1229.97" y="904.50" width="1" height="4" fill="#8c8c8c"/>
<rect x="1234.12" y="904.50" width="1" height="4" fill="#8c8c8c"/>
<rect x="1238.26" y="904.50" width="1" height="4" fill="#8c8c8c"/>
<rect x="1242.41" y="904.50" width="1" height="4" fill="#8c8c8c"/>
<rect x="1246.56" y="904.50" width="1" height="4" fill="#8c8c8c"/>
<rect x="1250.70" y="904.50" width="1" height="4" fill="#8c8c8c"/>
<rect x="1254.85" y="904.50" width="1" height="4" fill="#8c8c8c"/>
<rect x="1259.00" y="904.50" width="1" height="4" fill="#8c8c8c"/>
<rect x="1263.14" y="904.50" width="1" height="4" fill="#8c8c8c"/>
<rect x="1267.29" y="904.50" width="1" height="4" fill="#8c8c8c"/>
<rect x="1271.44" y="904.50" width="1" height="4" fill="#8c8c8c"/>
<rect x="1275.59" y="904.50" width="1" height="4" fill="#8c8c8c"/>
<rect x="1279.73" y="904.50" width="1" height="4" fill="#8c8c8c"/>
<rect x="1283.88" y="904.50" width="1" height="4" fill="#8c8c8c"/>
<rect x="1288.03" y="904.50" width="1" height="4" fill="#8c8c8c"/>
<rect x="1292.17" y="904.50" width="1" height="4" fill="#8c8c8c"/>
<rect x="1296.32" y="904.50" width="1" height="4" fill="#8c8c8c"/>
<rect x="1300.47" y="904.50" width="1" height="4" fill="#8c8c8c"/>
<rect x="1304.62" y="904.50" width="1" height="4" fill="#8c8c8c"/>
<rect x="1308.76" y="904.50" width="1" height="4" fill="#8c8c8c"/>
<rect x="1312.91" y="904.50" width="1" height="4" fill="#8c8c8c"/>
<rect x="1317.06" y="904.50" width="1" height="4" fill="#8c8c8c"/>
<rect x="1321.20" y="904.50" width="1" height="4" fill="#8c8c8c"/>
<rect x="1325.35" y="904.50" width="1" height="4" fill="#8c8c8c"/>
<rect x="1329.50" y="904.50" width="1" height="4" fill="#8c8c8c"/>
<rect x="1333.64" y="904.50" width="1" height="4" fill="#8c8c8c"/>
<rect x="1337.79" y="904.50" width="1" height="4" fill="#8c8c8c"/>
<rect x="1341.94" y="904.50" width="1" height="4" fill="#8c8c8c"/>
<rect x="1346.09" y="904.50" width="1" height="4" fill="#8c8c8c"/>
<rect x="1350.23" y="904.50" width="1" height="4" fill="#8c8c8c"/>
<rect x="1354.38" y="904.50" width="1" height="4" fill="#8c8c8c"/>
<rect x="1358.53" y="904.50" width="1" height="4" fill="#8c8c8c"/>
<rect x="1362.67" y="904.50" width="1" height="4" fill="#8c8c8c"/>
<rect x="1366.82" y="904.50" width="1" height="4" fill="#8c8c8c"/>
<rect x="1370.97" y="904.50" width="1" height="4" fill="#8c8c8c"/>
<rect x="1375.11" y="904.50" width="1" height="4" fill="#8c8c8c"/>
<rect x="1379.26" y="904.50" width="1" height="4" fill="#8c8c8c"/>
<rect x="1383.41" y="904.50" width="1" height="4" fill="#8c8c8c"/>
<rect x="1387.56" y="904.50" width="1" height="4" fill="#8c8c8c"/>
<rect x="1391.70" y="904.50" width="1" height="4" fill="#8c8c8c"/>
<rect x="1395.85" y="904.50" width="1" height="4" fill="#8c8c8c"/>
<rect x="1400.00" y="904.50" width="1" height="4" fill="#8c8c8c"/>
<rect x="1404.14" y="904.50" width="1" height="4" fill="#8c8c8c"/>
<rect x="1408.29" y="904.50" width="1" height="4" fill="#8c8c8c"/>
<rect x="1412.44" y="904.50" width="1" height="4" fill="#8c8c8c"/>
<rect x="1416.58" y="904.50" width="1" height="4" fill="#8c8c8c"/>
<rect x="1420.73" y="904.50" width="1" height="4" fill="#8c8c8c"/>
<rect x="1424.88" y="904.50" width="1" height="4" fill="#8c8c8c"/>
<rect x="1429.03" y="904.50" width="1" height="4" fill="#8c8c8c"/>
<rect x="1433.17" y="904.50" width="1" height="4" fill="#8c8c8c"/>
<rect x="1437.32" y="904.50" width="1" height="4" fill="#8c8c8c"/>
<rect x="1441.47" y="904.50" width="1" height="4" fill="#8c8c8c"/>
<rect x="1445.61" y="904.50" width="1" height="4" fill="#8c8c8c"/>
<text x="1120.57" y="896.9" font-size="10" text-anchor="middle" fill="#000">0</text>
<text x="1124.72" y="896.9" font-size="10" text-anchor="middle" fill="#000">0</text>
<text x="1128.87" y="896.9" font-size="10" text-anchor="middle" fill="#000">0</text>
<text x="1133.01" y="896.9" font-size="10" text-anchor="middle" fill="#000">0</text>
<text x="1137.16" y="896.9" font-size="10" text-anchor="middle" fill="#000">0</text>
<text x="1141.31" y="896.9" font-size="10" text-anchor="middle" fill="#000">0</text>
<text x="1145.46" y="896.9" font-size="10" text-anchor="middle" fill="#000">0</text>
<text x="1149.60" y="896.9" font-size="10" text-anchor="middle" fill="#000">0</text>
<text x="1153.75" y="896.9" font-size="10" text-anchor="middle" fill="#000">0</text>
<text x="1157.90" y="896.9" font-size="10" text-anchor="middle" fill="#000">0</text>
<text x="1162.04" y="896.9" font-size="10" text-anchor="middle" fill="#000">0</text>
<text x="1166.19" y="896.9" font-size="10" text-anchor="middle" fill="#000">0</text>
<text x="1170.34" y="896.9" font-size="10" text-anchor="middle" fill="#000">0</text>
<text x="1174.48" y="896.9" font-size="10" text-anchor="middle" fill="#000">0</text>
<text x="1178.63" y="896.9" font-size="10" text-anchor="middle" fill="#000">0</text>
<text x="1182.78" y="896.9" font-size="10" text-anchor="middle" fill="#000">0</text>
<text x="1186.93" y="896.9" font-size="10" text-anchor="middle" fill="#000">0</text>
<text x="1191.07" y="896.9" font-size="10" text-anchor="middle" fill="#000">0</text>
<text x="1195.22" y="896.9" font-size="10" text-anchor="middle" fill="#000">0</text>
<text x="1199.37" y="896.9" font-size="10" text-anchor="middle" fill="#000">0</text>
<text x="1203.51" y="896.9" font-size="10" text-anchor="middle" fill="#000">0</text>
<text x="1207.66" y="896.9" font-size="10" text-anchor="middle" fill="#000">0</text>
<text x="1211.81" y="896.9" font-size="10" text-anchor="middle" fill="#000">0</text>
<text x="1215.95" y="896.9" font-size="10" text-anchor="middle" fill="#000">0</text>
<text x="1220.10" y="896.9" font-size="10" text-anchor="middle" fill="#000">0</text>
<text x="1224.25" y="896.9" font-size="10" text-anchor="middle" fill="#000">0</text>
<rect x="1227.30" y="831.00" width="2.2" height="73.50" fill="#8bb734"/>
<text x="1228.40" y="823.70" font-size="10" text-anchor="middle" fill="#000">21</text>
<text x="1232.54" y="896.9" font-size="10" text-anchor="middle" fill="#000">0</text>
<text x="1236.69" y="896.9" font-size="10" text-anchor="middle" fill="#000">0</text>
<text x="1240.84" y="896.9" font-size="10" text-anchor="middle" fill="#000">0</text>
<text x="1244.98" y="896.9" font-size="10" text-anchor="middle" fill="#000">0</text>
<text x="1249.13" y="896.9" font-size="10" text-anchor="middle" fill="#000">0</text>
<text x="1253.28" y="896.9" font-size="10" text-anchor="middle" fill="#000">0</text>
<text x="1257.42" y="896.9" font-size="10" text-anchor="middle" fill="#000">0</text>
<text x="1261.57" y="896.9" font-size="10" text-anchor="middle" fill="#000">0</text>
<text x="1265.72" y="896.9" font-size="10" text-anchor="middle" fill="#000">0</text>
<rect x="1268.77" y="659.50" width="2.2" height="245.00" fill="#8bb734"/>
<text x="1269.87" y="652.20" font-size="10" text-anchor="middle" fill="#000">70</text>
<text x="1274.01" y="896.9" font-size="10" text-anchor="middle" fill="#000">0</text>
<text x="1278.16" y="896.9" font-size="10" text-anchor="middle" fill="#000">0</text>
<text x="1282.31" y="896.9" font-size="10" text-anchor="middle" fill="#000">0</text>
<text x="1286.45" y="896.9" font-size="10" text-anchor="middle" fill="#000">0</text>
<text x="1290.60" y="896.9" font-size="10" text-anchor="middle" fill="#000">0</text>
<text x="1294.75" y="896.9" font-size="10" text-anchor="middle" fill="#000">0</text>
<rect x="1297.79" y="708.50" width="2.2" height="196.00" fill="#8bb734"/>
<text x="1298.89" y="701.20" font-size="10" text-anchor="middle" fill="#000">56</text>
<text x="1303.04" y="896.9" font-size="10" text-anchor="middle" fill="#000">0</text>
<text x="1307.19" y="896.9" font-size="10" text-anchor="middle" fill="#000">0</text>
<text x="1311.34" y="896.9" font-size="10" text-anchor="middle" fill="#000">0</text>
<text x="1315.48" y="896.9" font-size="10" text-anchor="middle" fill="#000">0</text>
<text x="1319.63" y="896.9" font-size="10" text-anchor="middle" fill="#000">0</text>
<text x="1323.78" y="896.9" font-size="10" text-anchor="middle" fill="#000">0</text>
<text x="1327.92" y="896.9" font-size="10" text-anchor="middle" fill="#000">0</text>
<text x="1332.07" y="896.9" font-size="10" text-anchor="middle" fill="#000">0</text>
<text x="1336.22" y="896.9" font-size="10" text-anchor="middle" fill="#000">0</text>
<text x="1340.36" y="896.9" font-size="10" text-anchor="middle" fill="#000">0</text>
<text x="1344.51" y="896.9" font-size="10" text-anchor="middle" fill="#000">0</text>
<text x="1348.66" y="896.9" font-size="10" text-anchor="middle" fill="#000">0</text>
<text x="1352.81" y="896.9" font-size="10" text-anchor="middle" fill="#000">0</text>
<text x="1356.95" y="896.9" font-size="10" text-anchor="middle" fill="#000">0</text>
<text x="1361.10" y="896.9" font-size="10" text-anchor="middle" fill="#000">0</text>
<text x="1365.25" y="896.9" font-size="10" text-anchor="middle" fill="#000">0</text>
<text x="1369.39" y="896.9" font-size="10" text-anchor="middle" fill="#000">0</text>
<text x="1373.54" y="896.9" font-size="10" text-anchor="middle" fill="#000">0</text>
<text x="1377.69" y="896.9" font-size="10" text-anchor="middle" fill="#000">0</text>
<text x="1381.83" y="896.9" font-size="10" text-anchor="middle" fill="#000">0</text>
<text x="1385.98" y="896.9" font-size="10" text-anchor="middle" fill="#000">0</text>
<text x="1390.13" y="896.9" font-size="10" text-anchor="middle" fill="#000">0</text>
<text x="1394.28" y="896.9" font-size="10" text-anchor="middle" fill="#000">0</text>
<text x="1398.42" y="896.9" font-size="10" text-anchor="middle" fill="#000">0</text>
<text x="1402.57" y="896.9" font-size="10" text-anchor="middle" fill="#000">0</text>
<text x="1406.72" y="896.9" font-size="10" text-anchor="middle" fill="#000">0</text>
<text x="1410.86" y="896.9" font-size="10" text-anchor="middle" fill="#000">0</text>
<text x="1415.01" y="896.9" font-size="10" text-anchor="middle" fill="#000">0</text>
<text x="1419.16" y="896.9" font-size="10" text-anchor="middle" fill="#000">0</text>
<text x="1423.30" y="896.9" font-size="10" text-anchor="middle" fill="#000">0</text>
<text x="1427.45" y="896.9" font-size="10" text-anchor="middle" fill="#000">0</text>
<text x="1431.60" y="896.9" font-size="10" text-anchor="middle" fill="#000">0</text>
<text x="1435.75" y="896.9" font-size="10" text-anchor="middle" fill="#000">0</text>
<text x="1439.89" y="896.9" font-size="10" text-anchor="middle" fill="#000">0</text>
<text x="1444.04" y="896.9" font-size="10" text-anchor="middle" fill="#000">0</text>
<text transform="translate(1124.87,944.6) rotate(-90)" font-size="10" fill="#000">201201</text>
<text transform="translate(1141.46,944.6) rotate(-90)" font-size="10" fill="#000">201205</text>
<text transform="translate(1158.05,944.6) rotate(-90)" font-size="10" fill="#000">201209</text>
<text transform="translate(1174.64,944.6) rotate(-90)" font-size="10" fill="#000">201301</text>
<text transform="translate(1191.23,944.6) rotate(-90)" font-size="10" fill="#000">201305</text>
<text transform="translate(1207.81,944.6) rotate(-90)" font-size="10" fill="#000">201309</text>
<text transform="translate(1224.40,944.6) rotate(-90)" font-size="10" fill="#000">201401</text>
<text transform="translate(1240.99,944.6) rotate(-90)" font-size="10" fill="#000">201405</text>
<text transform="translate(1257.58,944.6) rotate(-90)" font-size="10" fill="#000">201409</text>
<text transform="translate(1274.17,944.6) rotate(-90)" font-size="10" fill="#000">201501</text>
<text transform="translate(1290.75,944.6) rotate(-90)" font-size="10" fill="#000">201505</text>
<text transform="translate(1307.34,944.6) rotate(-90)" font-size="10" fill="#000">201509</text>
<text transform="translate(1323.93,944.6) rotate(-90)" font-size="10" fill="#000">201601</text>
<text transform="translate(1340.52,944.6) rotate(-90)" font-size="10" fill="#000">201605</text>
<text transform="translate(1357.11,944.6) rotate(-90)" font-size="10" fill="#000">201609</text>
<text transform="translate(1373.69,944.6) rotate(-90)" font-size="10" fill="#000">201701</text>
<text transform="translate(1390.28,944.6) rotate(-90)" font-size="10" fill="#000">201705</text>
<text transform="translate(1406.87,944.6) rotate(-90)" font-size="10" fill="#000">201709</text>
<text transform="translate(1423.46,944.6) rotate(-90)" font-size="10" fill="#000">201801</text>
<text transform="translate(1440.05,944.6) rotate(-90)" font-size="10" fill="#000">201805</text>
</svg>
</body></html>
